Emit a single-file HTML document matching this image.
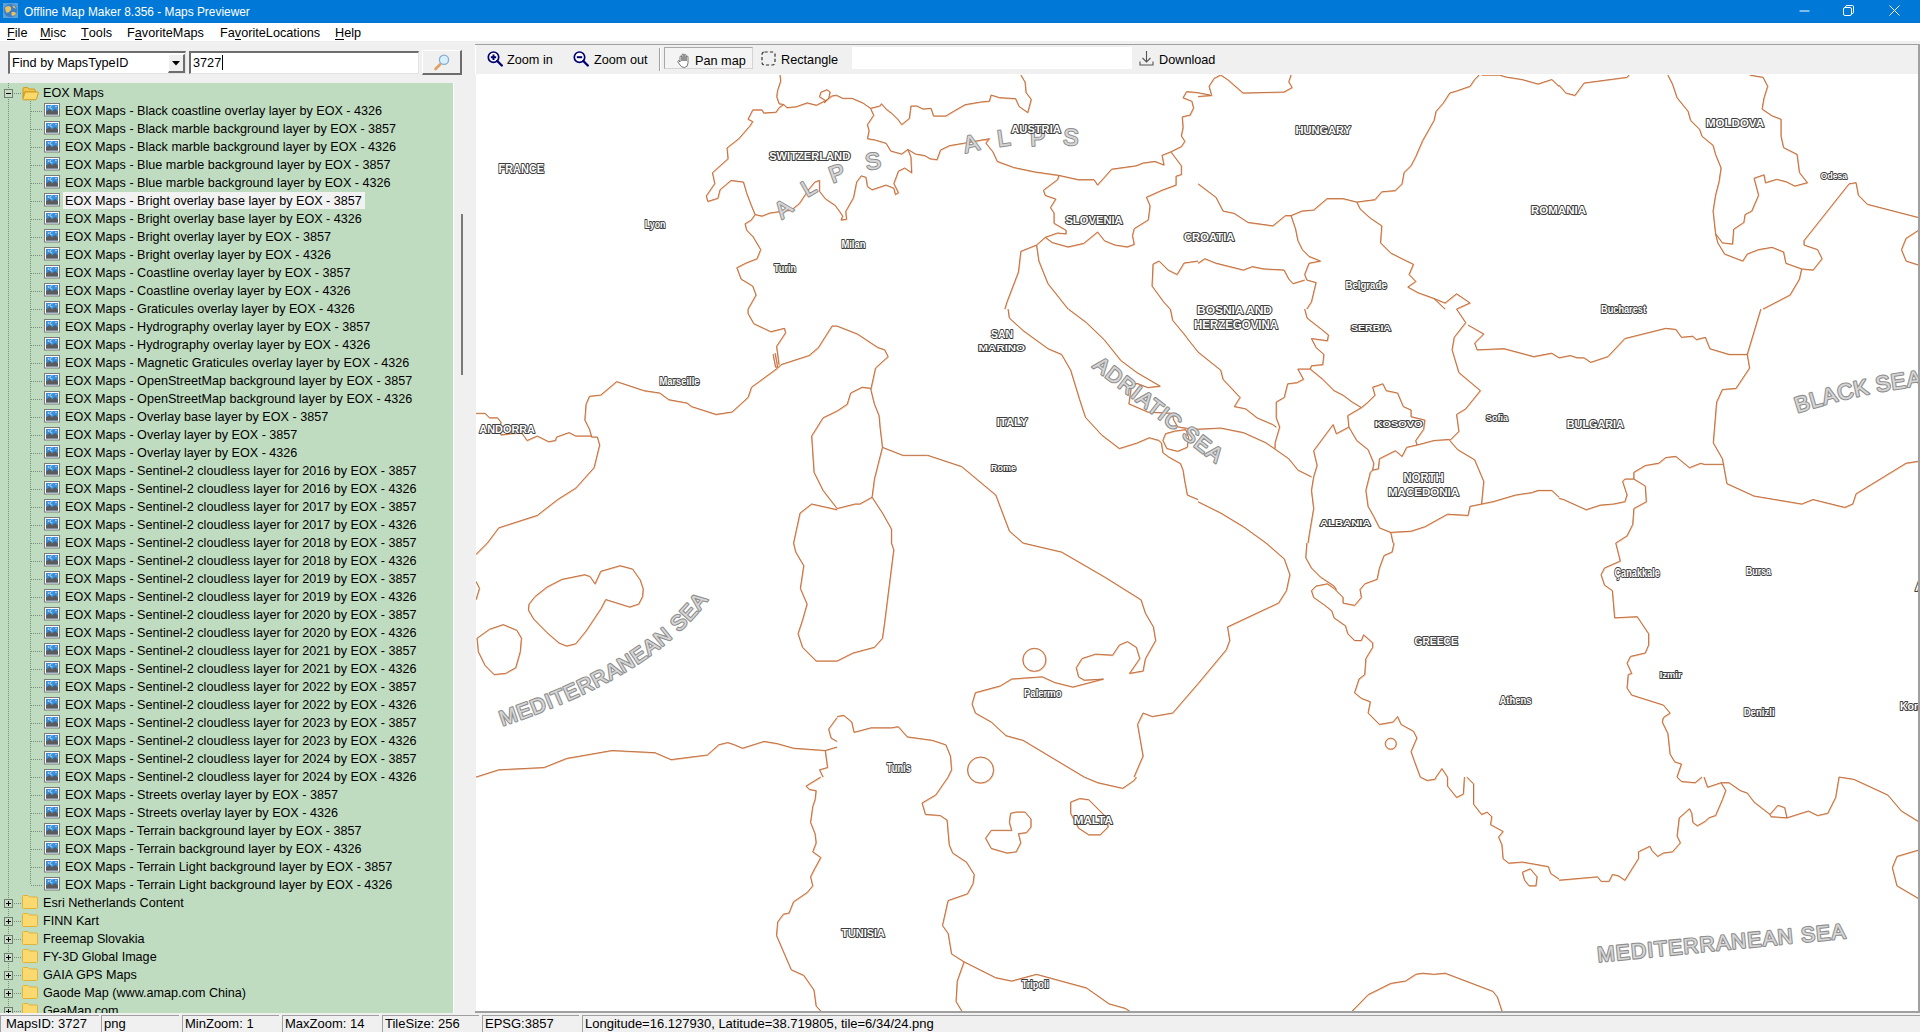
<!DOCTYPE html><html><head><meta charset="utf-8"><style>
*{box-sizing:border-box}
body{margin:0;width:1920px;height:1032px;overflow:hidden;background:#f0f0f0;font-family:"Liberation Sans",sans-serif;position:relative}
.abs{position:absolute}
#title{position:absolute;left:0;top:0;width:1920px;height:23px;background:#0078d7;color:#fff}
#title .tx{position:absolute;left:24px;top:5px;font-size:11.9px;}
#menu{position:absolute;left:0;top:23px;width:1920px;height:18px;background:#fff;font-size:12.7px;color:#000}
#menu span{position:absolute;top:3px}
#menu u{text-decoration:none;border-bottom:1px solid #000;line-height:11px;display:inline-block}
#left{position:absolute;left:0;top:42px;width:475px;height:972px;background:#f0f0f0}
#tree{position:absolute;left:0;top:83px;width:453px;height:930px;background:#c0dcc0;overflow:hidden}
#treewrap{position:absolute;left:0;top:0;width:453px;height:1013px;overflow:hidden}
.vdot{position:absolute;width:1px;background-image:linear-gradient(#7c8c7c 50%,transparent 50%);background-size:1px 2px}
.hdot{position:absolute;height:1px;background-image:linear-gradient(90deg,#7c8c7c 50%,transparent 50%);background-size:2px 1px}
.box{position:absolute;width:9px;height:9px;border:1px solid #6f7f6f;background:#c8dcc8}
.minus{position:absolute;left:1px;top:3px;width:5px;height:1px;background:#000}
.plus{position:absolute;left:3px;top:1px;width:1px;height:5px;background:#000}
.row{position:absolute;height:18px;width:420px}
.row svg{position:absolute;left:0;top:2px}
.t{position:absolute;top:3px;font-size:12.6px;line-height:14px;color:#000;white-space:nowrap;padding:0 2px 0 2px}
.t.sel{background:#f2f2f2;left:19px !important;top:1px;padding:2px 3px 1px 2px}
#status{position:absolute;left:0;top:1015px;width:1920px;height:17px;background:#f0f0f0;font-size:13px}
.sp{position:absolute;top:0;height:17px;border-top:1px solid #a0a0a0;border-left:1px solid #a0a0a0;padding-left:5px;line-height:15px;white-space:nowrap}
#tb{position:absolute;left:475px;top:44px;width:1445px;height:30px;background:#f0f0f0;border-top:1px solid #a0a0a0;font-size:12.7px}
#tb .b{position:absolute;top:6px;white-space:nowrap}
#map{position:absolute;left:476px;top:74px;width:1442px;height:937px;background:#fff;overflow:hidden}
#mapb{position:absolute;left:475px;top:1011px;width:1445px;height:2px;background:#a0a0a0}
#mapr{position:absolute;left:1918px;top:44px;width:2px;height:969px;background:#a0a0a0}
#mapl{position:absolute;left:475px;top:74px;width:1px;height:938px;background:#f0f0f0}
</style></head><body>
<div id="title">
<svg width="15" height="15" viewBox="0 0 16 16" style="position:absolute;left:3px;top:3px"><rect x="0" y="0" width="16" height="16" fill="#5aa0d8"/><circle cx="8" cy="8" r="7" fill="#3b7fc4"/><path d="M2 5 Q5 2 8 4 Q10 7 7 9 Q4 12 3 9Z M9 10 Q12 8 14 11 Q12 15 9 13Z M10 2 Q13 3 14 6 L11 5Z" fill="#e8c060"/></svg>
<span class="tx">Offline Map Maker 8.356 - Maps Previewer</span>
<svg width="12" height="12" viewBox="0 0 12 12" style="position:absolute;left:1799px;top:5px"><path d="M0.5 6h10" stroke="#fff" stroke-width="1"/></svg>
<svg width="12" height="12" viewBox="0 0 12 12" style="position:absolute;left:1843px;top:5px"><rect x="0.5" y="2.5" width="8" height="8" rx="1.5" fill="none" stroke="#fff"/><path d="M2.5 2.5 V2 Q2.5 0.5 4 0.5 H9.5 Q10.5 0.5 10.5 2 V7.5 Q10.5 8.5 9 8.5" fill="none" stroke="#fff"/></svg>
<svg width="12" height="12" viewBox="0 0 12 12" style="position:absolute;left:1889px;top:5px"><path d="M0.5 0.5L10.5 10.5M10.5 0.5L0.5 10.5" stroke="#fff" stroke-width="1"/></svg>
</div>
<div id="menu">
<span style="left:7px"><u>F</u>ile</span>
<span style="left:40px"><u>M</u>isc</span>
<span style="left:81px"><u>T</u>ools</span>
<span style="left:127px">F<u>a</u>voriteMaps</span>
<span style="left:220px">Fa<u>v</u>oriteLocations</span>
<span style="left:335px"><u>H</u>elp</span>
</div>
<div id="left">
 <div class="abs" style="left:8px;top:9px;width:178px;height:23px;background:#fff;border-top:2px solid #6d6d6d;border-left:2px solid #6d6d6d;border-right:1px solid #e3e3e3;border-bottom:1px solid #e3e3e3"></div>
 <div class="abs" style="left:12px;top:14px;font-size:12.7px">Find by MapsTypeID</div>
 <div class="abs" style="left:168px;top:12px;width:17px;height:19px;background:#f0f0f0;border-right:2px solid #6d6d6d;border-bottom:2px solid #6d6d6d;border-top:1px solid #fff;border-left:1px solid #fff"></div>
 <svg class="abs" style="left:172px;top:19px" width="9" height="5" viewBox="0 0 9 5"><path d="M0 0h8L4 4.5z" fill="#000"/></svg>
 <div class="abs" style="left:189px;top:9px;width:230px;height:23px;background:#fff;border-top:2px solid #6d6d6d;border-left:2px solid #6d6d6d;border-right:1px solid #e3e3e3;border-bottom:1px solid #e3e3e3"></div>
 <div class="abs" style="left:193px;top:14px;font-size:12.7px">3727</div>
 <div class="abs" style="left:222px;top:13px;width:1px;height:15px;background:#000"></div>
 <div class="abs" style="left:422px;top:8px;width:40px;height:25px;background:#f0f0f0;border-right:2px solid #6d6d6d;border-bottom:2px solid #6d6d6d;border-top:1px solid #fff;border-left:1px solid #fff"></div>
 <svg class="abs" style="left:433px;top:12px" width="18" height="18" viewBox="0 0 18 18"><path d="M2.5 15L7 10.5" stroke="#e0a060" stroke-width="2.6" stroke-linecap="round"/><circle cx="11" cy="5.8" r="4.6" fill="#d6f0fc" stroke="#8aaccc" stroke-width="1.3"/></svg>
</div>
<div id="treewrap"><div id="tree"></div>
<div class="abs" style="left:0;top:0;width:453px;height:1013px">
<div class="vdot" style="left:8px;top:83px;height:930px"></div>
<div class="vdot" style="left:30px;top:101px;height:783px"></div>
<div class="box" style="left:4px;top:89px"><div class="minus"></div></div>
<div class="hdot" style="left:14px;top:93px;width:8px"></div>
<div class="row" style="left:22px;top:83px"><svg class="fi" width="17" height="14" viewBox="0 0 17 14" style="top:4px"><path d="M1 1.8 Q1 0.5 2.3 0.5 L5.5 0.5 L7 2 L12 2 Q13.2 2 13.2 3.2 L13.2 5 L2 5 L1 11Z" fill="#f2c44a" stroke="#cf9a1c" stroke-width="1"/><path d="M3.2 5 L15.6 5 Q16.6 5 16.3 6 L14.6 11.8 Q14.3 12.8 13.2 12.8 L1.6 12.8 Q0.6 12.8 0.9 11.8Z" fill="#fbd86a" stroke="#cf9a1c" stroke-width="1"/></svg><span class="t" style="left:19px">EOX Maps</span></div>
<div class="hdot" style="left:31px;top:111px;width:12px"></div>
<div class="row" style="left:44px;top:101px"><svg class="ic" width="17" height="14" viewBox="0 0 17 14"><rect x="0.5" y="0.5" width="15" height="12.5" fill="#fff" stroke="#7a7a7a"/><rect x="2" y="2" width="12" height="9.5" fill="#3b8fd8"/><path d="M2 11.5 L2 8.5 L5.5 6 L8 8.5 L11 6 L14 8.5 L14 11.5Z" fill="#5b5b5b"/><circle cx="4.5" cy="4" r="0.8" fill="#cfe8ff"/><path d="M8.3 2.8 A1.6 1.6 0 1 0 8.3 5.8" fill="none" stroke="#e0f0ff" stroke-width="0.8"/><circle cx="12" cy="3.5" r="0.7" fill="#cfe8ff"/></svg><span class="t" style="left:19px">EOX Maps - Black coastline overlay layer by EOX - 4326</span></div>
<div class="hdot" style="left:31px;top:129px;width:12px"></div>
<div class="row" style="left:44px;top:119px"><svg class="ic" width="17" height="14" viewBox="0 0 17 14"><rect x="0.5" y="0.5" width="15" height="12.5" fill="#fff" stroke="#7a7a7a"/><rect x="2" y="2" width="12" height="9.5" fill="#3b8fd8"/><path d="M2 11.5 L2 8.5 L5.5 6 L8 8.5 L11 6 L14 8.5 L14 11.5Z" fill="#5b5b5b"/><circle cx="4.5" cy="4" r="0.8" fill="#cfe8ff"/><path d="M8.3 2.8 A1.6 1.6 0 1 0 8.3 5.8" fill="none" stroke="#e0f0ff" stroke-width="0.8"/><circle cx="12" cy="3.5" r="0.7" fill="#cfe8ff"/></svg><span class="t" style="left:19px">EOX Maps - Black marble background layer by EOX - 3857</span></div>
<div class="hdot" style="left:31px;top:147px;width:12px"></div>
<div class="row" style="left:44px;top:137px"><svg class="ic" width="17" height="14" viewBox="0 0 17 14"><rect x="0.5" y="0.5" width="15" height="12.5" fill="#fff" stroke="#7a7a7a"/><rect x="2" y="2" width="12" height="9.5" fill="#3b8fd8"/><path d="M2 11.5 L2 8.5 L5.5 6 L8 8.5 L11 6 L14 8.5 L14 11.5Z" fill="#5b5b5b"/><circle cx="4.5" cy="4" r="0.8" fill="#cfe8ff"/><path d="M8.3 2.8 A1.6 1.6 0 1 0 8.3 5.8" fill="none" stroke="#e0f0ff" stroke-width="0.8"/><circle cx="12" cy="3.5" r="0.7" fill="#cfe8ff"/></svg><span class="t" style="left:19px">EOX Maps - Black marble background layer by EOX - 4326</span></div>
<div class="hdot" style="left:31px;top:165px;width:12px"></div>
<div class="row" style="left:44px;top:155px"><svg class="ic" width="17" height="14" viewBox="0 0 17 14"><rect x="0.5" y="0.5" width="15" height="12.5" fill="#fff" stroke="#7a7a7a"/><rect x="2" y="2" width="12" height="9.5" fill="#3b8fd8"/><path d="M2 11.5 L2 8.5 L5.5 6 L8 8.5 L11 6 L14 8.5 L14 11.5Z" fill="#5b5b5b"/><circle cx="4.5" cy="4" r="0.8" fill="#cfe8ff"/><path d="M8.3 2.8 A1.6 1.6 0 1 0 8.3 5.8" fill="none" stroke="#e0f0ff" stroke-width="0.8"/><circle cx="12" cy="3.5" r="0.7" fill="#cfe8ff"/></svg><span class="t" style="left:19px">EOX Maps - Blue marble background layer by EOX - 3857</span></div>
<div class="hdot" style="left:31px;top:183px;width:12px"></div>
<div class="row" style="left:44px;top:173px"><svg class="ic" width="17" height="14" viewBox="0 0 17 14"><rect x="0.5" y="0.5" width="15" height="12.5" fill="#fff" stroke="#7a7a7a"/><rect x="2" y="2" width="12" height="9.5" fill="#3b8fd8"/><path d="M2 11.5 L2 8.5 L5.5 6 L8 8.5 L11 6 L14 8.5 L14 11.5Z" fill="#5b5b5b"/><circle cx="4.5" cy="4" r="0.8" fill="#cfe8ff"/><path d="M8.3 2.8 A1.6 1.6 0 1 0 8.3 5.8" fill="none" stroke="#e0f0ff" stroke-width="0.8"/><circle cx="12" cy="3.5" r="0.7" fill="#cfe8ff"/></svg><span class="t" style="left:19px">EOX Maps - Blue marble background layer by EOX - 4326</span></div>
<div class="hdot" style="left:31px;top:201px;width:12px"></div>
<div class="row" style="left:44px;top:191px"><svg class="ic" width="17" height="14" viewBox="0 0 17 14"><rect x="0.5" y="0.5" width="15" height="12.5" fill="#fff" stroke="#7a7a7a"/><rect x="2" y="2" width="12" height="9.5" fill="#3b8fd8"/><path d="M2 11.5 L2 8.5 L5.5 6 L8 8.5 L11 6 L14 8.5 L14 11.5Z" fill="#5b5b5b"/><circle cx="4.5" cy="4" r="0.8" fill="#cfe8ff"/><path d="M8.3 2.8 A1.6 1.6 0 1 0 8.3 5.8" fill="none" stroke="#e0f0ff" stroke-width="0.8"/><circle cx="12" cy="3.5" r="0.7" fill="#cfe8ff"/></svg><span class="t sel" style="left:19px">EOX Maps - Bright overlay base layer by EOX - 3857</span></div>
<div class="hdot" style="left:31px;top:219px;width:12px"></div>
<div class="row" style="left:44px;top:209px"><svg class="ic" width="17" height="14" viewBox="0 0 17 14"><rect x="0.5" y="0.5" width="15" height="12.5" fill="#fff" stroke="#7a7a7a"/><rect x="2" y="2" width="12" height="9.5" fill="#3b8fd8"/><path d="M2 11.5 L2 8.5 L5.5 6 L8 8.5 L11 6 L14 8.5 L14 11.5Z" fill="#5b5b5b"/><circle cx="4.5" cy="4" r="0.8" fill="#cfe8ff"/><path d="M8.3 2.8 A1.6 1.6 0 1 0 8.3 5.8" fill="none" stroke="#e0f0ff" stroke-width="0.8"/><circle cx="12" cy="3.5" r="0.7" fill="#cfe8ff"/></svg><span class="t" style="left:19px">EOX Maps - Bright overlay base layer by EOX - 4326</span></div>
<div class="hdot" style="left:31px;top:237px;width:12px"></div>
<div class="row" style="left:44px;top:227px"><svg class="ic" width="17" height="14" viewBox="0 0 17 14"><rect x="0.5" y="0.5" width="15" height="12.5" fill="#fff" stroke="#7a7a7a"/><rect x="2" y="2" width="12" height="9.5" fill="#3b8fd8"/><path d="M2 11.5 L2 8.5 L5.5 6 L8 8.5 L11 6 L14 8.5 L14 11.5Z" fill="#5b5b5b"/><circle cx="4.5" cy="4" r="0.8" fill="#cfe8ff"/><path d="M8.3 2.8 A1.6 1.6 0 1 0 8.3 5.8" fill="none" stroke="#e0f0ff" stroke-width="0.8"/><circle cx="12" cy="3.5" r="0.7" fill="#cfe8ff"/></svg><span class="t" style="left:19px">EOX Maps - Bright overlay layer by EOX - 3857</span></div>
<div class="hdot" style="left:31px;top:255px;width:12px"></div>
<div class="row" style="left:44px;top:245px"><svg class="ic" width="17" height="14" viewBox="0 0 17 14"><rect x="0.5" y="0.5" width="15" height="12.5" fill="#fff" stroke="#7a7a7a"/><rect x="2" y="2" width="12" height="9.5" fill="#3b8fd8"/><path d="M2 11.5 L2 8.5 L5.5 6 L8 8.5 L11 6 L14 8.5 L14 11.5Z" fill="#5b5b5b"/><circle cx="4.5" cy="4" r="0.8" fill="#cfe8ff"/><path d="M8.3 2.8 A1.6 1.6 0 1 0 8.3 5.8" fill="none" stroke="#e0f0ff" stroke-width="0.8"/><circle cx="12" cy="3.5" r="0.7" fill="#cfe8ff"/></svg><span class="t" style="left:19px">EOX Maps - Bright overlay layer by EOX - 4326</span></div>
<div class="hdot" style="left:31px;top:273px;width:12px"></div>
<div class="row" style="left:44px;top:263px"><svg class="ic" width="17" height="14" viewBox="0 0 17 14"><rect x="0.5" y="0.5" width="15" height="12.5" fill="#fff" stroke="#7a7a7a"/><rect x="2" y="2" width="12" height="9.5" fill="#3b8fd8"/><path d="M2 11.5 L2 8.5 L5.5 6 L8 8.5 L11 6 L14 8.5 L14 11.5Z" fill="#5b5b5b"/><circle cx="4.5" cy="4" r="0.8" fill="#cfe8ff"/><path d="M8.3 2.8 A1.6 1.6 0 1 0 8.3 5.8" fill="none" stroke="#e0f0ff" stroke-width="0.8"/><circle cx="12" cy="3.5" r="0.7" fill="#cfe8ff"/></svg><span class="t" style="left:19px">EOX Maps - Coastline overlay layer by EOX - 3857</span></div>
<div class="hdot" style="left:31px;top:291px;width:12px"></div>
<div class="row" style="left:44px;top:281px"><svg class="ic" width="17" height="14" viewBox="0 0 17 14"><rect x="0.5" y="0.5" width="15" height="12.5" fill="#fff" stroke="#7a7a7a"/><rect x="2" y="2" width="12" height="9.5" fill="#3b8fd8"/><path d="M2 11.5 L2 8.5 L5.5 6 L8 8.5 L11 6 L14 8.5 L14 11.5Z" fill="#5b5b5b"/><circle cx="4.5" cy="4" r="0.8" fill="#cfe8ff"/><path d="M8.3 2.8 A1.6 1.6 0 1 0 8.3 5.8" fill="none" stroke="#e0f0ff" stroke-width="0.8"/><circle cx="12" cy="3.5" r="0.7" fill="#cfe8ff"/></svg><span class="t" style="left:19px">EOX Maps - Coastline overlay layer by EOX - 4326</span></div>
<div class="hdot" style="left:31px;top:309px;width:12px"></div>
<div class="row" style="left:44px;top:299px"><svg class="ic" width="17" height="14" viewBox="0 0 17 14"><rect x="0.5" y="0.5" width="15" height="12.5" fill="#fff" stroke="#7a7a7a"/><rect x="2" y="2" width="12" height="9.5" fill="#3b8fd8"/><path d="M2 11.5 L2 8.5 L5.5 6 L8 8.5 L11 6 L14 8.5 L14 11.5Z" fill="#5b5b5b"/><circle cx="4.5" cy="4" r="0.8" fill="#cfe8ff"/><path d="M8.3 2.8 A1.6 1.6 0 1 0 8.3 5.8" fill="none" stroke="#e0f0ff" stroke-width="0.8"/><circle cx="12" cy="3.5" r="0.7" fill="#cfe8ff"/></svg><span class="t" style="left:19px">EOX Maps - Graticules overlay layer by EOX - 4326</span></div>
<div class="hdot" style="left:31px;top:327px;width:12px"></div>
<div class="row" style="left:44px;top:317px"><svg class="ic" width="17" height="14" viewBox="0 0 17 14"><rect x="0.5" y="0.5" width="15" height="12.5" fill="#fff" stroke="#7a7a7a"/><rect x="2" y="2" width="12" height="9.5" fill="#3b8fd8"/><path d="M2 11.5 L2 8.5 L5.5 6 L8 8.5 L11 6 L14 8.5 L14 11.5Z" fill="#5b5b5b"/><circle cx="4.5" cy="4" r="0.8" fill="#cfe8ff"/><path d="M8.3 2.8 A1.6 1.6 0 1 0 8.3 5.8" fill="none" stroke="#e0f0ff" stroke-width="0.8"/><circle cx="12" cy="3.5" r="0.7" fill="#cfe8ff"/></svg><span class="t" style="left:19px">EOX Maps - Hydrography overlay layer by EOX - 3857</span></div>
<div class="hdot" style="left:31px;top:345px;width:12px"></div>
<div class="row" style="left:44px;top:335px"><svg class="ic" width="17" height="14" viewBox="0 0 17 14"><rect x="0.5" y="0.5" width="15" height="12.5" fill="#fff" stroke="#7a7a7a"/><rect x="2" y="2" width="12" height="9.5" fill="#3b8fd8"/><path d="M2 11.5 L2 8.5 L5.5 6 L8 8.5 L11 6 L14 8.5 L14 11.5Z" fill="#5b5b5b"/><circle cx="4.5" cy="4" r="0.8" fill="#cfe8ff"/><path d="M8.3 2.8 A1.6 1.6 0 1 0 8.3 5.8" fill="none" stroke="#e0f0ff" stroke-width="0.8"/><circle cx="12" cy="3.5" r="0.7" fill="#cfe8ff"/></svg><span class="t" style="left:19px">EOX Maps - Hydrography overlay layer by EOX - 4326</span></div>
<div class="hdot" style="left:31px;top:363px;width:12px"></div>
<div class="row" style="left:44px;top:353px"><svg class="ic" width="17" height="14" viewBox="0 0 17 14"><rect x="0.5" y="0.5" width="15" height="12.5" fill="#fff" stroke="#7a7a7a"/><rect x="2" y="2" width="12" height="9.5" fill="#3b8fd8"/><path d="M2 11.5 L2 8.5 L5.5 6 L8 8.5 L11 6 L14 8.5 L14 11.5Z" fill="#5b5b5b"/><circle cx="4.5" cy="4" r="0.8" fill="#cfe8ff"/><path d="M8.3 2.8 A1.6 1.6 0 1 0 8.3 5.8" fill="none" stroke="#e0f0ff" stroke-width="0.8"/><circle cx="12" cy="3.5" r="0.7" fill="#cfe8ff"/></svg><span class="t" style="left:19px">EOX Maps - Magnetic Graticules overlay layer by EOX - 4326</span></div>
<div class="hdot" style="left:31px;top:381px;width:12px"></div>
<div class="row" style="left:44px;top:371px"><svg class="ic" width="17" height="14" viewBox="0 0 17 14"><rect x="0.5" y="0.5" width="15" height="12.5" fill="#fff" stroke="#7a7a7a"/><rect x="2" y="2" width="12" height="9.5" fill="#3b8fd8"/><path d="M2 11.5 L2 8.5 L5.5 6 L8 8.5 L11 6 L14 8.5 L14 11.5Z" fill="#5b5b5b"/><circle cx="4.5" cy="4" r="0.8" fill="#cfe8ff"/><path d="M8.3 2.8 A1.6 1.6 0 1 0 8.3 5.8" fill="none" stroke="#e0f0ff" stroke-width="0.8"/><circle cx="12" cy="3.5" r="0.7" fill="#cfe8ff"/></svg><span class="t" style="left:19px">EOX Maps - OpenStreetMap background layer by EOX - 3857</span></div>
<div class="hdot" style="left:31px;top:399px;width:12px"></div>
<div class="row" style="left:44px;top:389px"><svg class="ic" width="17" height="14" viewBox="0 0 17 14"><rect x="0.5" y="0.5" width="15" height="12.5" fill="#fff" stroke="#7a7a7a"/><rect x="2" y="2" width="12" height="9.5" fill="#3b8fd8"/><path d="M2 11.5 L2 8.5 L5.5 6 L8 8.5 L11 6 L14 8.5 L14 11.5Z" fill="#5b5b5b"/><circle cx="4.5" cy="4" r="0.8" fill="#cfe8ff"/><path d="M8.3 2.8 A1.6 1.6 0 1 0 8.3 5.8" fill="none" stroke="#e0f0ff" stroke-width="0.8"/><circle cx="12" cy="3.5" r="0.7" fill="#cfe8ff"/></svg><span class="t" style="left:19px">EOX Maps - OpenStreetMap background layer by EOX - 4326</span></div>
<div class="hdot" style="left:31px;top:417px;width:12px"></div>
<div class="row" style="left:44px;top:407px"><svg class="ic" width="17" height="14" viewBox="0 0 17 14"><rect x="0.5" y="0.5" width="15" height="12.5" fill="#fff" stroke="#7a7a7a"/><rect x="2" y="2" width="12" height="9.5" fill="#3b8fd8"/><path d="M2 11.5 L2 8.5 L5.5 6 L8 8.5 L11 6 L14 8.5 L14 11.5Z" fill="#5b5b5b"/><circle cx="4.5" cy="4" r="0.8" fill="#cfe8ff"/><path d="M8.3 2.8 A1.6 1.6 0 1 0 8.3 5.8" fill="none" stroke="#e0f0ff" stroke-width="0.8"/><circle cx="12" cy="3.5" r="0.7" fill="#cfe8ff"/></svg><span class="t" style="left:19px">EOX Maps - Overlay base layer by EOX - 3857</span></div>
<div class="hdot" style="left:31px;top:435px;width:12px"></div>
<div class="row" style="left:44px;top:425px"><svg class="ic" width="17" height="14" viewBox="0 0 17 14"><rect x="0.5" y="0.5" width="15" height="12.5" fill="#fff" stroke="#7a7a7a"/><rect x="2" y="2" width="12" height="9.5" fill="#3b8fd8"/><path d="M2 11.5 L2 8.5 L5.5 6 L8 8.5 L11 6 L14 8.5 L14 11.5Z" fill="#5b5b5b"/><circle cx="4.5" cy="4" r="0.8" fill="#cfe8ff"/><path d="M8.3 2.8 A1.6 1.6 0 1 0 8.3 5.8" fill="none" stroke="#e0f0ff" stroke-width="0.8"/><circle cx="12" cy="3.5" r="0.7" fill="#cfe8ff"/></svg><span class="t" style="left:19px">EOX Maps - Overlay layer by EOX - 3857</span></div>
<div class="hdot" style="left:31px;top:453px;width:12px"></div>
<div class="row" style="left:44px;top:443px"><svg class="ic" width="17" height="14" viewBox="0 0 17 14"><rect x="0.5" y="0.5" width="15" height="12.5" fill="#fff" stroke="#7a7a7a"/><rect x="2" y="2" width="12" height="9.5" fill="#3b8fd8"/><path d="M2 11.5 L2 8.5 L5.5 6 L8 8.5 L11 6 L14 8.5 L14 11.5Z" fill="#5b5b5b"/><circle cx="4.5" cy="4" r="0.8" fill="#cfe8ff"/><path d="M8.3 2.8 A1.6 1.6 0 1 0 8.3 5.8" fill="none" stroke="#e0f0ff" stroke-width="0.8"/><circle cx="12" cy="3.5" r="0.7" fill="#cfe8ff"/></svg><span class="t" style="left:19px">EOX Maps - Overlay layer by EOX - 4326</span></div>
<div class="hdot" style="left:31px;top:471px;width:12px"></div>
<div class="row" style="left:44px;top:461px"><svg class="ic" width="17" height="14" viewBox="0 0 17 14"><rect x="0.5" y="0.5" width="15" height="12.5" fill="#fff" stroke="#7a7a7a"/><rect x="2" y="2" width="12" height="9.5" fill="#3b8fd8"/><path d="M2 11.5 L2 8.5 L5.5 6 L8 8.5 L11 6 L14 8.5 L14 11.5Z" fill="#5b5b5b"/><circle cx="4.5" cy="4" r="0.8" fill="#cfe8ff"/><path d="M8.3 2.8 A1.6 1.6 0 1 0 8.3 5.8" fill="none" stroke="#e0f0ff" stroke-width="0.8"/><circle cx="12" cy="3.5" r="0.7" fill="#cfe8ff"/></svg><span class="t" style="left:19px">EOX Maps - Sentinel-2 cloudless layer for 2016 by EOX - 3857</span></div>
<div class="hdot" style="left:31px;top:489px;width:12px"></div>
<div class="row" style="left:44px;top:479px"><svg class="ic" width="17" height="14" viewBox="0 0 17 14"><rect x="0.5" y="0.5" width="15" height="12.5" fill="#fff" stroke="#7a7a7a"/><rect x="2" y="2" width="12" height="9.5" fill="#3b8fd8"/><path d="M2 11.5 L2 8.5 L5.5 6 L8 8.5 L11 6 L14 8.5 L14 11.5Z" fill="#5b5b5b"/><circle cx="4.5" cy="4" r="0.8" fill="#cfe8ff"/><path d="M8.3 2.8 A1.6 1.6 0 1 0 8.3 5.8" fill="none" stroke="#e0f0ff" stroke-width="0.8"/><circle cx="12" cy="3.5" r="0.7" fill="#cfe8ff"/></svg><span class="t" style="left:19px">EOX Maps - Sentinel-2 cloudless layer for 2016 by EOX - 4326</span></div>
<div class="hdot" style="left:31px;top:507px;width:12px"></div>
<div class="row" style="left:44px;top:497px"><svg class="ic" width="17" height="14" viewBox="0 0 17 14"><rect x="0.5" y="0.5" width="15" height="12.5" fill="#fff" stroke="#7a7a7a"/><rect x="2" y="2" width="12" height="9.5" fill="#3b8fd8"/><path d="M2 11.5 L2 8.5 L5.5 6 L8 8.5 L11 6 L14 8.5 L14 11.5Z" fill="#5b5b5b"/><circle cx="4.5" cy="4" r="0.8" fill="#cfe8ff"/><path d="M8.3 2.8 A1.6 1.6 0 1 0 8.3 5.8" fill="none" stroke="#e0f0ff" stroke-width="0.8"/><circle cx="12" cy="3.5" r="0.7" fill="#cfe8ff"/></svg><span class="t" style="left:19px">EOX Maps - Sentinel-2 cloudless layer for 2017 by EOX - 3857</span></div>
<div class="hdot" style="left:31px;top:525px;width:12px"></div>
<div class="row" style="left:44px;top:515px"><svg class="ic" width="17" height="14" viewBox="0 0 17 14"><rect x="0.5" y="0.5" width="15" height="12.5" fill="#fff" stroke="#7a7a7a"/><rect x="2" y="2" width="12" height="9.5" fill="#3b8fd8"/><path d="M2 11.5 L2 8.5 L5.5 6 L8 8.5 L11 6 L14 8.5 L14 11.5Z" fill="#5b5b5b"/><circle cx="4.5" cy="4" r="0.8" fill="#cfe8ff"/><path d="M8.3 2.8 A1.6 1.6 0 1 0 8.3 5.8" fill="none" stroke="#e0f0ff" stroke-width="0.8"/><circle cx="12" cy="3.5" r="0.7" fill="#cfe8ff"/></svg><span class="t" style="left:19px">EOX Maps - Sentinel-2 cloudless layer for 2017 by EOX - 4326</span></div>
<div class="hdot" style="left:31px;top:543px;width:12px"></div>
<div class="row" style="left:44px;top:533px"><svg class="ic" width="17" height="14" viewBox="0 0 17 14"><rect x="0.5" y="0.5" width="15" height="12.5" fill="#fff" stroke="#7a7a7a"/><rect x="2" y="2" width="12" height="9.5" fill="#3b8fd8"/><path d="M2 11.5 L2 8.5 L5.5 6 L8 8.5 L11 6 L14 8.5 L14 11.5Z" fill="#5b5b5b"/><circle cx="4.5" cy="4" r="0.8" fill="#cfe8ff"/><path d="M8.3 2.8 A1.6 1.6 0 1 0 8.3 5.8" fill="none" stroke="#e0f0ff" stroke-width="0.8"/><circle cx="12" cy="3.5" r="0.7" fill="#cfe8ff"/></svg><span class="t" style="left:19px">EOX Maps - Sentinel-2 cloudless layer for 2018 by EOX - 3857</span></div>
<div class="hdot" style="left:31px;top:561px;width:12px"></div>
<div class="row" style="left:44px;top:551px"><svg class="ic" width="17" height="14" viewBox="0 0 17 14"><rect x="0.5" y="0.5" width="15" height="12.5" fill="#fff" stroke="#7a7a7a"/><rect x="2" y="2" width="12" height="9.5" fill="#3b8fd8"/><path d="M2 11.5 L2 8.5 L5.5 6 L8 8.5 L11 6 L14 8.5 L14 11.5Z" fill="#5b5b5b"/><circle cx="4.5" cy="4" r="0.8" fill="#cfe8ff"/><path d="M8.3 2.8 A1.6 1.6 0 1 0 8.3 5.8" fill="none" stroke="#e0f0ff" stroke-width="0.8"/><circle cx="12" cy="3.5" r="0.7" fill="#cfe8ff"/></svg><span class="t" style="left:19px">EOX Maps - Sentinel-2 cloudless layer for 2018 by EOX - 4326</span></div>
<div class="hdot" style="left:31px;top:579px;width:12px"></div>
<div class="row" style="left:44px;top:569px"><svg class="ic" width="17" height="14" viewBox="0 0 17 14"><rect x="0.5" y="0.5" width="15" height="12.5" fill="#fff" stroke="#7a7a7a"/><rect x="2" y="2" width="12" height="9.5" fill="#3b8fd8"/><path d="M2 11.5 L2 8.5 L5.5 6 L8 8.5 L11 6 L14 8.5 L14 11.5Z" fill="#5b5b5b"/><circle cx="4.5" cy="4" r="0.8" fill="#cfe8ff"/><path d="M8.3 2.8 A1.6 1.6 0 1 0 8.3 5.8" fill="none" stroke="#e0f0ff" stroke-width="0.8"/><circle cx="12" cy="3.5" r="0.7" fill="#cfe8ff"/></svg><span class="t" style="left:19px">EOX Maps - Sentinel-2 cloudless layer for 2019 by EOX - 3857</span></div>
<div class="hdot" style="left:31px;top:597px;width:12px"></div>
<div class="row" style="left:44px;top:587px"><svg class="ic" width="17" height="14" viewBox="0 0 17 14"><rect x="0.5" y="0.5" width="15" height="12.5" fill="#fff" stroke="#7a7a7a"/><rect x="2" y="2" width="12" height="9.5" fill="#3b8fd8"/><path d="M2 11.5 L2 8.5 L5.5 6 L8 8.5 L11 6 L14 8.5 L14 11.5Z" fill="#5b5b5b"/><circle cx="4.5" cy="4" r="0.8" fill="#cfe8ff"/><path d="M8.3 2.8 A1.6 1.6 0 1 0 8.3 5.8" fill="none" stroke="#e0f0ff" stroke-width="0.8"/><circle cx="12" cy="3.5" r="0.7" fill="#cfe8ff"/></svg><span class="t" style="left:19px">EOX Maps - Sentinel-2 cloudless layer for 2019 by EOX - 4326</span></div>
<div class="hdot" style="left:31px;top:615px;width:12px"></div>
<div class="row" style="left:44px;top:605px"><svg class="ic" width="17" height="14" viewBox="0 0 17 14"><rect x="0.5" y="0.5" width="15" height="12.5" fill="#fff" stroke="#7a7a7a"/><rect x="2" y="2" width="12" height="9.5" fill="#3b8fd8"/><path d="M2 11.5 L2 8.5 L5.5 6 L8 8.5 L11 6 L14 8.5 L14 11.5Z" fill="#5b5b5b"/><circle cx="4.5" cy="4" r="0.8" fill="#cfe8ff"/><path d="M8.3 2.8 A1.6 1.6 0 1 0 8.3 5.8" fill="none" stroke="#e0f0ff" stroke-width="0.8"/><circle cx="12" cy="3.5" r="0.7" fill="#cfe8ff"/></svg><span class="t" style="left:19px">EOX Maps - Sentinel-2 cloudless layer for 2020 by EOX - 3857</span></div>
<div class="hdot" style="left:31px;top:633px;width:12px"></div>
<div class="row" style="left:44px;top:623px"><svg class="ic" width="17" height="14" viewBox="0 0 17 14"><rect x="0.5" y="0.5" width="15" height="12.5" fill="#fff" stroke="#7a7a7a"/><rect x="2" y="2" width="12" height="9.5" fill="#3b8fd8"/><path d="M2 11.5 L2 8.5 L5.5 6 L8 8.5 L11 6 L14 8.5 L14 11.5Z" fill="#5b5b5b"/><circle cx="4.5" cy="4" r="0.8" fill="#cfe8ff"/><path d="M8.3 2.8 A1.6 1.6 0 1 0 8.3 5.8" fill="none" stroke="#e0f0ff" stroke-width="0.8"/><circle cx="12" cy="3.5" r="0.7" fill="#cfe8ff"/></svg><span class="t" style="left:19px">EOX Maps - Sentinel-2 cloudless layer for 2020 by EOX - 4326</span></div>
<div class="hdot" style="left:31px;top:651px;width:12px"></div>
<div class="row" style="left:44px;top:641px"><svg class="ic" width="17" height="14" viewBox="0 0 17 14"><rect x="0.5" y="0.5" width="15" height="12.5" fill="#fff" stroke="#7a7a7a"/><rect x="2" y="2" width="12" height="9.5" fill="#3b8fd8"/><path d="M2 11.5 L2 8.5 L5.5 6 L8 8.5 L11 6 L14 8.5 L14 11.5Z" fill="#5b5b5b"/><circle cx="4.5" cy="4" r="0.8" fill="#cfe8ff"/><path d="M8.3 2.8 A1.6 1.6 0 1 0 8.3 5.8" fill="none" stroke="#e0f0ff" stroke-width="0.8"/><circle cx="12" cy="3.5" r="0.7" fill="#cfe8ff"/></svg><span class="t" style="left:19px">EOX Maps - Sentinel-2 cloudless layer for 2021 by EOX - 3857</span></div>
<div class="hdot" style="left:31px;top:669px;width:12px"></div>
<div class="row" style="left:44px;top:659px"><svg class="ic" width="17" height="14" viewBox="0 0 17 14"><rect x="0.5" y="0.5" width="15" height="12.5" fill="#fff" stroke="#7a7a7a"/><rect x="2" y="2" width="12" height="9.5" fill="#3b8fd8"/><path d="M2 11.5 L2 8.5 L5.5 6 L8 8.5 L11 6 L14 8.5 L14 11.5Z" fill="#5b5b5b"/><circle cx="4.5" cy="4" r="0.8" fill="#cfe8ff"/><path d="M8.3 2.8 A1.6 1.6 0 1 0 8.3 5.8" fill="none" stroke="#e0f0ff" stroke-width="0.8"/><circle cx="12" cy="3.5" r="0.7" fill="#cfe8ff"/></svg><span class="t" style="left:19px">EOX Maps - Sentinel-2 cloudless layer for 2021 by EOX - 4326</span></div>
<div class="hdot" style="left:31px;top:687px;width:12px"></div>
<div class="row" style="left:44px;top:677px"><svg class="ic" width="17" height="14" viewBox="0 0 17 14"><rect x="0.5" y="0.5" width="15" height="12.5" fill="#fff" stroke="#7a7a7a"/><rect x="2" y="2" width="12" height="9.5" fill="#3b8fd8"/><path d="M2 11.5 L2 8.5 L5.5 6 L8 8.5 L11 6 L14 8.5 L14 11.5Z" fill="#5b5b5b"/><circle cx="4.5" cy="4" r="0.8" fill="#cfe8ff"/><path d="M8.3 2.8 A1.6 1.6 0 1 0 8.3 5.8" fill="none" stroke="#e0f0ff" stroke-width="0.8"/><circle cx="12" cy="3.5" r="0.7" fill="#cfe8ff"/></svg><span class="t" style="left:19px">EOX Maps - Sentinel-2 cloudless layer for 2022 by EOX - 3857</span></div>
<div class="hdot" style="left:31px;top:705px;width:12px"></div>
<div class="row" style="left:44px;top:695px"><svg class="ic" width="17" height="14" viewBox="0 0 17 14"><rect x="0.5" y="0.5" width="15" height="12.5" fill="#fff" stroke="#7a7a7a"/><rect x="2" y="2" width="12" height="9.5" fill="#3b8fd8"/><path d="M2 11.5 L2 8.5 L5.5 6 L8 8.5 L11 6 L14 8.5 L14 11.5Z" fill="#5b5b5b"/><circle cx="4.5" cy="4" r="0.8" fill="#cfe8ff"/><path d="M8.3 2.8 A1.6 1.6 0 1 0 8.3 5.8" fill="none" stroke="#e0f0ff" stroke-width="0.8"/><circle cx="12" cy="3.5" r="0.7" fill="#cfe8ff"/></svg><span class="t" style="left:19px">EOX Maps - Sentinel-2 cloudless layer for 2022 by EOX - 4326</span></div>
<div class="hdot" style="left:31px;top:723px;width:12px"></div>
<div class="row" style="left:44px;top:713px"><svg class="ic" width="17" height="14" viewBox="0 0 17 14"><rect x="0.5" y="0.5" width="15" height="12.5" fill="#fff" stroke="#7a7a7a"/><rect x="2" y="2" width="12" height="9.5" fill="#3b8fd8"/><path d="M2 11.5 L2 8.5 L5.5 6 L8 8.5 L11 6 L14 8.5 L14 11.5Z" fill="#5b5b5b"/><circle cx="4.5" cy="4" r="0.8" fill="#cfe8ff"/><path d="M8.3 2.8 A1.6 1.6 0 1 0 8.3 5.8" fill="none" stroke="#e0f0ff" stroke-width="0.8"/><circle cx="12" cy="3.5" r="0.7" fill="#cfe8ff"/></svg><span class="t" style="left:19px">EOX Maps - Sentinel-2 cloudless layer for 2023 by EOX - 3857</span></div>
<div class="hdot" style="left:31px;top:741px;width:12px"></div>
<div class="row" style="left:44px;top:731px"><svg class="ic" width="17" height="14" viewBox="0 0 17 14"><rect x="0.5" y="0.5" width="15" height="12.5" fill="#fff" stroke="#7a7a7a"/><rect x="2" y="2" width="12" height="9.5" fill="#3b8fd8"/><path d="M2 11.5 L2 8.5 L5.5 6 L8 8.5 L11 6 L14 8.5 L14 11.5Z" fill="#5b5b5b"/><circle cx="4.5" cy="4" r="0.8" fill="#cfe8ff"/><path d="M8.3 2.8 A1.6 1.6 0 1 0 8.3 5.8" fill="none" stroke="#e0f0ff" stroke-width="0.8"/><circle cx="12" cy="3.5" r="0.7" fill="#cfe8ff"/></svg><span class="t" style="left:19px">EOX Maps - Sentinel-2 cloudless layer for 2023 by EOX - 4326</span></div>
<div class="hdot" style="left:31px;top:759px;width:12px"></div>
<div class="row" style="left:44px;top:749px"><svg class="ic" width="17" height="14" viewBox="0 0 17 14"><rect x="0.5" y="0.5" width="15" height="12.5" fill="#fff" stroke="#7a7a7a"/><rect x="2" y="2" width="12" height="9.5" fill="#3b8fd8"/><path d="M2 11.5 L2 8.5 L5.5 6 L8 8.5 L11 6 L14 8.5 L14 11.5Z" fill="#5b5b5b"/><circle cx="4.5" cy="4" r="0.8" fill="#cfe8ff"/><path d="M8.3 2.8 A1.6 1.6 0 1 0 8.3 5.8" fill="none" stroke="#e0f0ff" stroke-width="0.8"/><circle cx="12" cy="3.5" r="0.7" fill="#cfe8ff"/></svg><span class="t" style="left:19px">EOX Maps - Sentinel-2 cloudless layer for 2024 by EOX - 3857</span></div>
<div class="hdot" style="left:31px;top:777px;width:12px"></div>
<div class="row" style="left:44px;top:767px"><svg class="ic" width="17" height="14" viewBox="0 0 17 14"><rect x="0.5" y="0.5" width="15" height="12.5" fill="#fff" stroke="#7a7a7a"/><rect x="2" y="2" width="12" height="9.5" fill="#3b8fd8"/><path d="M2 11.5 L2 8.5 L5.5 6 L8 8.5 L11 6 L14 8.5 L14 11.5Z" fill="#5b5b5b"/><circle cx="4.5" cy="4" r="0.8" fill="#cfe8ff"/><path d="M8.3 2.8 A1.6 1.6 0 1 0 8.3 5.8" fill="none" stroke="#e0f0ff" stroke-width="0.8"/><circle cx="12" cy="3.5" r="0.7" fill="#cfe8ff"/></svg><span class="t" style="left:19px">EOX Maps - Sentinel-2 cloudless layer for 2024 by EOX - 4326</span></div>
<div class="hdot" style="left:31px;top:795px;width:12px"></div>
<div class="row" style="left:44px;top:785px"><svg class="ic" width="17" height="14" viewBox="0 0 17 14"><rect x="0.5" y="0.5" width="15" height="12.5" fill="#fff" stroke="#7a7a7a"/><rect x="2" y="2" width="12" height="9.5" fill="#3b8fd8"/><path d="M2 11.5 L2 8.5 L5.5 6 L8 8.5 L11 6 L14 8.5 L14 11.5Z" fill="#5b5b5b"/><circle cx="4.5" cy="4" r="0.8" fill="#cfe8ff"/><path d="M8.3 2.8 A1.6 1.6 0 1 0 8.3 5.8" fill="none" stroke="#e0f0ff" stroke-width="0.8"/><circle cx="12" cy="3.5" r="0.7" fill="#cfe8ff"/></svg><span class="t" style="left:19px">EOX Maps - Streets overlay layer by EOX - 3857</span></div>
<div class="hdot" style="left:31px;top:813px;width:12px"></div>
<div class="row" style="left:44px;top:803px"><svg class="ic" width="17" height="14" viewBox="0 0 17 14"><rect x="0.5" y="0.5" width="15" height="12.5" fill="#fff" stroke="#7a7a7a"/><rect x="2" y="2" width="12" height="9.5" fill="#3b8fd8"/><path d="M2 11.5 L2 8.5 L5.5 6 L8 8.5 L11 6 L14 8.5 L14 11.5Z" fill="#5b5b5b"/><circle cx="4.5" cy="4" r="0.8" fill="#cfe8ff"/><path d="M8.3 2.8 A1.6 1.6 0 1 0 8.3 5.8" fill="none" stroke="#e0f0ff" stroke-width="0.8"/><circle cx="12" cy="3.5" r="0.7" fill="#cfe8ff"/></svg><span class="t" style="left:19px">EOX Maps - Streets overlay layer by EOX - 4326</span></div>
<div class="hdot" style="left:31px;top:831px;width:12px"></div>
<div class="row" style="left:44px;top:821px"><svg class="ic" width="17" height="14" viewBox="0 0 17 14"><rect x="0.5" y="0.5" width="15" height="12.5" fill="#fff" stroke="#7a7a7a"/><rect x="2" y="2" width="12" height="9.5" fill="#3b8fd8"/><path d="M2 11.5 L2 8.5 L5.5 6 L8 8.5 L11 6 L14 8.5 L14 11.5Z" fill="#5b5b5b"/><circle cx="4.5" cy="4" r="0.8" fill="#cfe8ff"/><path d="M8.3 2.8 A1.6 1.6 0 1 0 8.3 5.8" fill="none" stroke="#e0f0ff" stroke-width="0.8"/><circle cx="12" cy="3.5" r="0.7" fill="#cfe8ff"/></svg><span class="t" style="left:19px">EOX Maps - Terrain background layer by EOX - 3857</span></div>
<div class="hdot" style="left:31px;top:849px;width:12px"></div>
<div class="row" style="left:44px;top:839px"><svg class="ic" width="17" height="14" viewBox="0 0 17 14"><rect x="0.5" y="0.5" width="15" height="12.5" fill="#fff" stroke="#7a7a7a"/><rect x="2" y="2" width="12" height="9.5" fill="#3b8fd8"/><path d="M2 11.5 L2 8.5 L5.5 6 L8 8.5 L11 6 L14 8.5 L14 11.5Z" fill="#5b5b5b"/><circle cx="4.5" cy="4" r="0.8" fill="#cfe8ff"/><path d="M8.3 2.8 A1.6 1.6 0 1 0 8.3 5.8" fill="none" stroke="#e0f0ff" stroke-width="0.8"/><circle cx="12" cy="3.5" r="0.7" fill="#cfe8ff"/></svg><span class="t" style="left:19px">EOX Maps - Terrain background layer by EOX - 4326</span></div>
<div class="hdot" style="left:31px;top:867px;width:12px"></div>
<div class="row" style="left:44px;top:857px"><svg class="ic" width="17" height="14" viewBox="0 0 17 14"><rect x="0.5" y="0.5" width="15" height="12.5" fill="#fff" stroke="#7a7a7a"/><rect x="2" y="2" width="12" height="9.5" fill="#3b8fd8"/><path d="M2 11.5 L2 8.5 L5.5 6 L8 8.5 L11 6 L14 8.5 L14 11.5Z" fill="#5b5b5b"/><circle cx="4.5" cy="4" r="0.8" fill="#cfe8ff"/><path d="M8.3 2.8 A1.6 1.6 0 1 0 8.3 5.8" fill="none" stroke="#e0f0ff" stroke-width="0.8"/><circle cx="12" cy="3.5" r="0.7" fill="#cfe8ff"/></svg><span class="t" style="left:19px">EOX Maps - Terrain Light background layer by EOX - 3857</span></div>
<div class="hdot" style="left:31px;top:885px;width:12px"></div>
<div class="row" style="left:44px;top:875px"><svg class="ic" width="17" height="14" viewBox="0 0 17 14"><rect x="0.5" y="0.5" width="15" height="12.5" fill="#fff" stroke="#7a7a7a"/><rect x="2" y="2" width="12" height="9.5" fill="#3b8fd8"/><path d="M2 11.5 L2 8.5 L5.5 6 L8 8.5 L11 6 L14 8.5 L14 11.5Z" fill="#5b5b5b"/><circle cx="4.5" cy="4" r="0.8" fill="#cfe8ff"/><path d="M8.3 2.8 A1.6 1.6 0 1 0 8.3 5.8" fill="none" stroke="#e0f0ff" stroke-width="0.8"/><circle cx="12" cy="3.5" r="0.7" fill="#cfe8ff"/></svg><span class="t" style="left:19px">EOX Maps - Terrain Light background layer by EOX - 4326</span></div>
<div class="box" style="left:4px;top:899px"><div class="minus"></div><div class="plus"></div></div>
<div class="hdot" style="left:14px;top:903px;width:8px"></div>
<div class="row" style="left:22px;top:893px"><svg class="fi" width="17" height="14" viewBox="0 0 17 14"><path d="M0.5 1.5 Q0.5 0.5 1.5 0.5 L6 0.5 L7.5 2 L14.5 2 Q15.5 2 15.5 3 L15.5 12.5 Q15.5 13.5 14.5 13.5 L1.5 13.5 Q0.5 13.5 0.5 12.5Z" fill="#fbd971" stroke="#e0b23a"/></svg><span class="t" style="left:19px">Esri Netherlands Content</span></div>
<div class="box" style="left:4px;top:917px"><div class="minus"></div><div class="plus"></div></div>
<div class="hdot" style="left:14px;top:921px;width:8px"></div>
<div class="row" style="left:22px;top:911px"><svg class="fi" width="17" height="14" viewBox="0 0 17 14"><path d="M0.5 1.5 Q0.5 0.5 1.5 0.5 L6 0.5 L7.5 2 L14.5 2 Q15.5 2 15.5 3 L15.5 12.5 Q15.5 13.5 14.5 13.5 L1.5 13.5 Q0.5 13.5 0.5 12.5Z" fill="#fbd971" stroke="#e0b23a"/></svg><span class="t" style="left:19px">FINN Kart</span></div>
<div class="box" style="left:4px;top:935px"><div class="minus"></div><div class="plus"></div></div>
<div class="hdot" style="left:14px;top:939px;width:8px"></div>
<div class="row" style="left:22px;top:929px"><svg class="fi" width="17" height="14" viewBox="0 0 17 14"><path d="M0.5 1.5 Q0.5 0.5 1.5 0.5 L6 0.5 L7.5 2 L14.5 2 Q15.5 2 15.5 3 L15.5 12.5 Q15.5 13.5 14.5 13.5 L1.5 13.5 Q0.5 13.5 0.5 12.5Z" fill="#fbd971" stroke="#e0b23a"/></svg><span class="t" style="left:19px">Freemap Slovakia</span></div>
<div class="box" style="left:4px;top:953px"><div class="minus"></div><div class="plus"></div></div>
<div class="hdot" style="left:14px;top:957px;width:8px"></div>
<div class="row" style="left:22px;top:947px"><svg class="fi" width="17" height="14" viewBox="0 0 17 14"><path d="M0.5 1.5 Q0.5 0.5 1.5 0.5 L6 0.5 L7.5 2 L14.5 2 Q15.5 2 15.5 3 L15.5 12.5 Q15.5 13.5 14.5 13.5 L1.5 13.5 Q0.5 13.5 0.5 12.5Z" fill="#fbd971" stroke="#e0b23a"/></svg><span class="t" style="left:19px">FY-3D Global Image</span></div>
<div class="box" style="left:4px;top:971px"><div class="minus"></div><div class="plus"></div></div>
<div class="hdot" style="left:14px;top:975px;width:8px"></div>
<div class="row" style="left:22px;top:965px"><svg class="fi" width="17" height="14" viewBox="0 0 17 14"><path d="M0.5 1.5 Q0.5 0.5 1.5 0.5 L6 0.5 L7.5 2 L14.5 2 Q15.5 2 15.5 3 L15.5 12.5 Q15.5 13.5 14.5 13.5 L1.5 13.5 Q0.5 13.5 0.5 12.5Z" fill="#fbd971" stroke="#e0b23a"/></svg><span class="t" style="left:19px">GAIA GPS Maps</span></div>
<div class="box" style="left:4px;top:989px"><div class="minus"></div><div class="plus"></div></div>
<div class="hdot" style="left:14px;top:993px;width:8px"></div>
<div class="row" style="left:22px;top:983px"><svg class="fi" width="17" height="14" viewBox="0 0 17 14"><path d="M0.5 1.5 Q0.5 0.5 1.5 0.5 L6 0.5 L7.5 2 L14.5 2 Q15.5 2 15.5 3 L15.5 12.5 Q15.5 13.5 14.5 13.5 L1.5 13.5 Q0.5 13.5 0.5 12.5Z" fill="#fbd971" stroke="#e0b23a"/></svg><span class="t" style="left:19px">Gaode Map (www.amap.com China)</span></div>
<div class="box" style="left:4px;top:1007px"><div class="minus"></div><div class="plus"></div></div>
<div class="hdot" style="left:14px;top:1011px;width:8px"></div>
<div class="row" style="left:22px;top:1001px"><svg class="fi" width="17" height="14" viewBox="0 0 17 14"><path d="M0.5 1.5 Q0.5 0.5 1.5 0.5 L6 0.5 L7.5 2 L14.5 2 Q15.5 2 15.5 3 L15.5 12.5 Q15.5 13.5 14.5 13.5 L1.5 13.5 Q0.5 13.5 0.5 12.5Z" fill="#fbd971" stroke="#e0b23a"/></svg><span class="t" style="left:19px">GeaMap.com</span></div>
</div></div>
<div class="abs" style="left:453px;top:83px;width:1px;height:930px;background:#fbfefb"></div>
<div class="abs" style="left:461px;top:214px;width:2px;height:161px;background:#7a7a7a"></div>
<div id="tb">
 <div class="b" style="left:0;top:0;width:1px;height:29px;background:#fff"></div>
 <svg class="b" style="left:12px;top:6px" width="17" height="16" viewBox="0 0 17 16"><circle cx="6.5" cy="6.2" r="5.2" fill="#fff" stroke="#000070" stroke-width="1.7"/><path d="M3.8 6.2h5.4M6.5 3.5v5.4" stroke="#000070" stroke-width="2"/><path d="M10.3 10l4.5 4.5" stroke="#000070" stroke-width="2.4" stroke-linecap="round"/></svg>
 <span class="b" style="left:32px;top:8px">Zoom in</span>
 <svg class="b" style="left:98px;top:6px" width="17" height="16" viewBox="0 0 17 16"><circle cx="6.5" cy="6.2" r="5.2" fill="#fff" stroke="#000070" stroke-width="1.7"/><path d="M3.8 6.2h5.4" stroke="#000070" stroke-width="2"/><path d="M10.3 10l4.5 4.5" stroke="#000070" stroke-width="2.4" stroke-linecap="round"/></svg>
 <span class="b" style="left:119px;top:8px">Zoom out</span>
 <div class="b" style="left:184px;top:3px;width:1px;height:23px;background:#a0a0a0"></div>
 <div class="b" style="left:185px;top:3px;width:1px;height:23px;background:#fff"></div>
 <div class="b" style="left:189px;top:2px;width:89px;height:22px;border:1px solid #d4d4d4;border-top-color:#a8a8a8;border-left-color:#a8a8a8;background:#f4f4f4"></div>
 <svg class="b" style="left:202px;top:8px" width="14" height="15" viewBox="0 0 14 15"><path d="M3 9 V4 Q3 3 4 3 Q5 3 5 4 V8 V2 Q5 1 6 1 Q7 1 7 2 V8 V2.5 Q7 1.5 8 1.5 Q9 1.5 9 2.5 V8 V4 Q9 3 10 3 Q11 3 11 4 V10 Q11 14 7.5 14.5 Q4.5 14.5 3 12 L1 9 Q0.5 8 1.5 7.5 Q2.5 7.5 3 9" fill="#fff" stroke="#444" stroke-width="0.7"/></svg>
 <span class="b" style="left:220px;top:9px">Pan map</span>
 <svg class="b" style="left:286px;top:6px" width="16" height="16" viewBox="0 0 16 16"><rect x="1" y="1" width="13" height="13" rx="2.5" fill="none" stroke="#333" stroke-width="1.2" stroke-dasharray="3.2 2.2"/></svg>
 <span class="b" style="left:306px;top:8px">Rectangle</span>
 <div class="b" style="left:377px;top:2px;width:280px;height:22px;background:#fff"></div>
 <svg class="b" style="left:664px;top:5px" width="15" height="17" viewBox="0 0 15 17"><path d="M7.5 1V11.5M3.5 8L7.5 12L11.5 8M1 11.5V15H14V11.5" fill="none" stroke="#555" stroke-width="1.1"/></svg>
 <span class="b" style="left:684px;top:8px">Download</span>
</div>
<div id="map"><svg width="1444" height="937" viewBox="0 0 1444 937" style="position:absolute;left:0;top:1px"><g fill="none" stroke="#f8bc92" stroke-width="1.4" stroke-linejoin="round" transform="translate(0.35 0.35)"><path d="M304.0 0.0 L304.6 6.2 L301.5 15.5 L300.7 21.7 L303.0 28.7 L307.7 29.5"/><path d="M307.7 29.5 L310.8 32.6 L320.0 31.8 L331.0 27.9 L340.3 30.2 L346.5 27.1 L349.6 25.6 L355.8 21.0 L360.4 20.2 L366.6 23.3 L376.0 23.3 L386.8 27.9 L394.5 33.3"/><path d="M349.6 25.6 L343.4 21.7 L345.0 17.0 L351.0 14.7 L354.0 17.0 L352.7 23.3 L348.0 28.0"/><path d="M307.7 29.5 L303.0 32.6 L300.0 37.2 L287.6 38.0 L286.0 34.9 L276.7 34.9 L272.0 44.2 L276.7 46.5 L273.6 51.2 L262.8 63.6 L251.0 72.9 L252.0 83.7 L236.4 97.7 L238.7 108.5 L230.2 121.0 L231.8 126.4 L241.8 123.3 L244.0 114.7 L255.0 105.4 L267.4 107.0 L270.5 117.8 L275.2 130.2 L279.0 139.5 L275.2 145.0 L269.0 148.8 L270.5 155.0 L275.2 160.0 L276.6 161.0 L284.6 174.6 L281.0 183.7 L270.0 188.0 L260.8 192.7 L265.0 204.0 L276.6 211.0 L280.0 220.0 L272.0 234.0"/><path d="M279.0 139.5 L286.0 141.1 L293.8 138.0 L304.6 136.4 L315.5 134.9 L323.2 128.7 L332.5 114.7 L338.7 107.0 L343.4 105.4 L343.4 116.3 L349.6 124.0 L358.9 130.2 L363.5 136.4 L366.6 141.1 L365.0 145.0 L370.5 144.2 L369.7 136.4 L377.5 122.5 L380.6 107.0 L385.2 100.8 L389.9 102.3 L391.4 111.6 L396.1 114.7 L410.0 110.0 L417.8 113.2 L419.3 119.4 L422.4 117.8 L417.8 108.5 L422.4 96.1 L428.7 93.0 L435.6 97.7 L434.9 82.2 L431.8 74.4 L425.6 79.0 L414.7 76.0 L410.0 68.2 L399.2 65.0 L391.4 63.6 L393.0 55.8 L391.4 49.6 L397.6 40.3 L394.5 33.3"/><path d="M394.5 33.3 L403.8 31.0 L405.4 28.7 L410.0 34.0 L416.2 38.8 L422.4 45.0 L425.6 49.6 L433.3 43.4 L434.9 31.0 L441.0 31.0 L447.0 34.0 L455.0 33.3 L457.5 41.0 L469.7 41.0 L478.4 35.8 L489.0 29.7 L504.6 27.0 L513.3 26.2 L515.0 20.0 L523.8 22.7 L539.5 23.6 L543.0 31.4 L551.7 37.5 L555.2 24.4 L550.0 17.5 L549.0 7.0 L544.8 0.0"/><path d="M431.8 74.4 L439.5 79.0 L448.8 80.6 L454.0 83.8 L461.0 84.6 L464.5 75.0 L473.2 70.7 L489.0 68.0 L513.3 63.7 L509.8 68.0 L516.8 76.8 L521.2 86.4 L537.8 92.5 L558.7 96.9 L583.0 100.4 L602.3 104.7 L618.0 104.7 L621.5 110.0 L635.5 94.2 L660.0 90.8 L667.0 88.0 L679.0 86.4 L687.9 90.0 L686.0 80.3 L694.8 76.8 L705.3 71.6 L708.8 66.3 L705.3 61.0 L707.0 52.4 L706.2 41.9 L714.0 40.0 L717.5 33.0 L715.8 26.2 L707.0 22.7 L710.5 16.6 L721.0 17.5 L734.0 20.0"/><path d="M583.0 100.4 L581.4 104.7 L567.4 115.2 L569.2 120.4 L579.7 124.0 L574.4 132.6 L578.0 138.0 L578.0 148.3 L590.0 155.3 L590.0 158.8 L581.4 158.0 L569.2 162.3 L560.5 170.0 L544.8 176.3 L542.4 197.0 L531.0 226.8 L528.8 234.0"/><path d="M560.5 170.0 L562.8 186.0 L571.9 208.6 L592.0 234.0"/><path d="M569.2 162.3 L576.2 167.5 L591.9 171.9 L607.6 168.4 L621.5 157.0 L628.5 165.8 L639.0 170.0 L651.2 171.9 L658.2 169.3 L656.4 160.6 L658.2 153.6 L672.2 144.9 L674.0 130.9 L670.4 122.2 L686.0 115.2 L700.0 110.0 L700.0 101.2 L705.3 99.5 L705.3 90.8 L694.8 76.8"/><path d="M722.0 186.0 L708.0 188.0 L701.0 199.5 L692.0 195.0 L683.0 186.0 L677.0 189.0 L676.0 211.0 L687.5 226.8 L694.0 234.0"/><path d="M722.0 21.5 L735.6 20.4 L733.0 11.3 L738.0 3.4 L744.7 0.0 L751.5 4.5 L767.0 18.0 L808.0 17.0 L816.0 12.5 L812.7 6.8 L815.0 0.0"/><path d="M1003.0 0.0 L998.6 4.5 L994.0 11.3 L980.5 16.0 L973.7 18.0 L967.0 28.3 L960.0 36.3 L958.0 45.4 L946.5 65.8 L939.7 81.6 L935.0 90.7 L928.0 97.5 L926.0 108.8 L919.0 115.6 L905.7 116.8 L898.9 124.7 L880.7 127.0 L867.0 123.6 L851.0 123.6 L837.6 135.0 L826.0 136.0 L815.0 140.6"/><path d="M1005.5 0.0 L1023.6 0.0 L1030.0 2.0 L1046.0 4.5 L1062.0 9.0 L1075.7 4.5 L1083.0 11.3"/><path d="M722.0 108.8 L740.0 122.4 L747.0 136.0 L758.0 138.3 L772.0 147.4 L796.8 150.8 L809.3 140.6 L815.0 140.6"/><path d="M880.7 127.0 L884.0 133.8 L894.0 142.9 L905.7 150.8 L904.5 167.8 L914.7 178.0 L926.0 183.7 L937.4 189.3 L933.0 199.5 L939.7 206.4 L931.8 212.0 L942.0 217.7 L957.8 223.4 L969.0 234.0"/><path d="M957.8 223.4 L969.0 228.0 L980.5 218.8 L994.0 227.9 L980.5 234.0"/><path d="M815.0 140.6 L819.5 154.0 L821.8 165.5 L826.3 174.6 L833.0 181.4 L844.4 186.0 L833.0 188.2 L828.6 199.5 L830.8 205.0 L840.0 207.5 L835.4 226.8 L830.8 234.0"/><path d="M722.0 188.2 L728.8 183.7 L740.0 188.2 L753.7 191.6 L767.4 195.0 L776.4 191.6 L787.8 193.9 L808.0 195.0 L812.7 204.0 L817.0 208.6 L828.6 205.0"/><path d="M1083.0 10.2 L1089.8 18.0 L1098.9 20.4 L1108.0 8.0 L1151.0 2.3 L1153.0 0.0"/><path d="M1191.8 0.0 L1196.4 9.0 L1201.0 22.7 L1212.0 36.3 L1214.5 45.4 L1223.6 54.4 L1225.9 61.2 L1237.0 70.3 L1239.5 79.4 L1245.0 93.0 L1243.0 106.6 L1239.5 120.2 L1237.0 136.0 L1239.5 158.7 L1241.7 167.8 L1248.5 179.0 L1266.7 186.0 L1271.2 179.0 L1282.5 174.6 L1296.0 172.3 L1307.5 176.9 L1309.8 188.2 L1325.6 193.9 L1337.0 195.0 L1346.0 183.7 L1341.5 174.6 L1328.0 170.0 L1328.0 165.5 L1373.0 108.8 L1380.0 107.7 L1382.3 120.2 L1391.4 129.3 L1444.0 142.9"/><path d="M1273.5 0.0 L1287.0 2.3 L1291.6 11.3 L1288.0 22.7 L1286.0 34.0 L1296.0 40.8 L1305.0 44.2 L1305.0 61.2 L1307.5 72.6 L1321.0 79.4 L1323.4 97.5 L1331.3 107.7 L1318.8 111.0 L1309.8 106.6 L1300.7 104.3 L1289.4 107.7 L1288.0 99.8 L1278.0 103.2 L1282.5 120.2 L1275.7 136.0 L1269.0 139.5 L1267.8 147.4 L1257.6 154.2 L1256.5 169.0 L1246.3 167.8 L1239.5 158.7"/><path d="M1325.6 193.9 L1323.4 204.0 L1314.0 220.0 L1287.0 234.0"/><path d="M1444.0 154.2 L1430.0 163.3 L1425.4 174.6 L1430.0 186.0 L1444.0 190.5"/><path d="M272.0 234.0 L272.0 238.5 L277.8 248.7 L294.8 256.7 L308.4 253.3 L309.5 257.8 L300.5 271.4 L303.0 289.6"/><path d="M297.0 279.0 L299.5 292.0 L301.6 292.0 L299.0 278.0"/><path d="M301.6 293.0 L305.0 289.6 L333.0 280.5 L342.4 272.5 L356.0 251.0 L361.0 251.0"/><path d="M301.6 293.0 L275.5 312.2 L272.0 322.4 L256.0 337.0 L240.0 339.4 L215.4 331.5 L211.0 328.0 L192.7 324.7 L183.7 318.0 L167.8 315.6 L140.6 306.6 L124.7 320.0 L113.4 321.3 L110.0 329.2 L108.8 345.0 L113.4 354.2 L115.6 362.0 L121.3 362.0 L123.6 370.0 L118.0 392.7 L99.8 413.0 L81.6 424.5 L61.2 440.4 L22.7 452.8 L11.3 468.0"/><path d="M0.0 338.3 L9.0 338.3 L13.6 342.8 L21.5 342.8 L25.0 347.4 L22.7 354.2 L25.0 359.9 L34.0 358.7 L45.4 357.6 L51.0 365.5 L61.2 361.0 L72.6 366.7 L79.4 365.5 L80.5 362.0 L93.0 357.6 L99.8 361.0 L115.6 361.0"/><path d="M361.0 336.0 L347.0 342.8 L335.6 361.0 L338.0 397.3 L347.0 415.4 L361.0 433.5"/><path d="M361.0 434.7 L335.6 429.0 L324.0 438.0 L317.5 468.0"/><path d="M361.0 251.0 L381.4 259.0 L401.8 272.5 L408.6 274.8 L412.0 281.6 L399.5 293.0 L395.0 313.4 L386.0 312.2 L374.6 318.0 L371.2 329.2 L361.0 336.0"/><path d="M395.0 313.4 L395.0 315.6 L398.4 329.2 L403.0 340.6 L404.0 352.0 L406.4 372.3 L401.8 390.5 L398.4 404.0 L396.0 422.2 L383.7 429.0 L379.0 429.0 L361.0 433.5"/><path d="M406.4 372.3 L426.8 380.3 L451.7 380.3 L485.7 391.6 L519.7 420.0 L533.3 456.0 L547.0 468.0"/><path d="M396.0 422.2 L406.4 438.0 L415.4 454.0 L415.4 468.0"/><path d="M532.0 234.0 L533.3 243.0 L547.0 255.5 L572.0 273.7 L585.5 279.4 L594.6 295.2 L603.6 324.7 L609.4 342.3 L625.7 360.0 L643.3 373.5 L661.0 368.0 L673.2 362.7 L682.7 365.4 L685.4 368.0 L686.8 377.6 L692.2 381.7 L704.4 388.5 L707.0 395.3 L708.5 405.0 L711.3 420.0 L722.0 424.5"/><path d="M592.3 234.0 L610.4 247.6 L628.4 265.0 L644.7 285.4 L661.0 297.6 L684.0 311.1 L671.8 312.5 L661.0 308.4 L655.6 309.8 L652.8 328.8 L671.8 337.0 L696.3 338.3 L697.6 345.0 L701.7 351.8 L709.8 353.2 L722.0 354.2"/><path d="M709.8 354.6 L699.0 356.0 L689.5 358.6 L686.8 365.4 L690.8 373.5 L701.7 376.3 L711.2 372.2 L712.5 362.7 L709.8 354.6"/><path d="M694.3 234.0 L696.6 245.3 L708.0 259.0 L712.5 265.0 L722.0 277.0"/><path d="M828.6 234.0 L831.0 243.0 L845.6 254.4 L852.4 260.0 L851.3 265.7 L835.4 263.5 L840.0 272.5 L847.8 279.4 L846.7 289.6 L835.4 290.7 L834.2 294.0"/><path d="M834.2 294.0 L821.8 294.0 L827.4 304.3 L820.6 307.7 L811.6 308.8 L808.2 322.4 L800.2 327.0 L800.2 342.8 L803.6 352.0 L799.0 367.8 L799.0 373.5"/><path d="M722.0 277.0 L744.7 295.2 L747.0 304.3 L764.0 322.4 L758.3 331.5 L769.6 333.8 L781.0 342.8 L796.8 349.6 L800.2 352.0"/><path d="M834.2 294.0 L846.7 304.3 L858.0 315.6 L867.0 320.2 L876.2 327.0 L885.3 332.6 L871.7 340.6 L872.8 352.0 L860.3 358.7 L857.0 349.6 L837.6 375.7 L841.0 390.5 L837.6 401.8"/><path d="M885.3 332.6 L892.0 327.0 L898.9 320.2 L896.6 312.2 L906.8 308.8 L910.2 315.6 L921.5 318.0 L927.2 331.5 L935.0 335.0 L935.0 341.7 L948.8 345.0 L947.6 354.2 L939.7 365.5 L940.8 370.0"/><path d="M872.8 352.0 L880.7 365.5 L892.0 374.6 L897.7 388.2 L896.6 395.0 L902.3 393.9 L903.4 383.7 L919.3 375.7 L926.0 381.4 L930.6 372.3 L940.8 370.0 L957.8 365.5 L973.7 364.4"/><path d="M980.5 234.0 L989.6 247.6 L978.2 262.3 L976.0 274.8 L982.8 297.5 L1004.3 315.6 L989.6 333.8 L980.5 339.4 L982.8 356.4 L973.7 365.5"/><path d="M991.8 249.9 L1007.7 259.0 L998.6 268.0 L1001.0 274.8 L1028.0 273.7 L1057.6 281.6 L1075.7 278.2 L1083.0 282.8"/><path d="M973.7 365.5 L981.6 374.6 L998.6 384.8 L1007.7 406.3 L1005.5 429.0 L994.0 431.3 L992.0 440.4 L971.4 439.2 L948.8 451.7 L935.0 456.2 L914.7 457.4 L903.4 452.8 L897.7 441.5 L892.0 431.3 L889.8 415.4 L894.3 397.3 L896.6 395.0"/><path d="M1005.5 429.0 L1016.8 426.7 L1039.5 420.0 L1055.3 417.7 L1062.0 415.4 L1075.7 415.4 L1083.0 422.2"/><path d="M914.7 457.4 L917.0 468.0"/><path d="M837.6 401.8 L835.4 415.4 L837.6 433.5 L833.0 460.8 L832.0 468.0"/><path d="M722.0 354.2 L744.7 353.0 L767.4 357.6 L790.0 367.8 L812.7 383.7 L821.8 395.0 L835.4 401.8"/><path d="M722.0 426.7 L744.7 438.0 L767.4 451.7 L790.0 468.0"/><path d="M1083.0 282.8 L1094.3 280.5 L1101.0 282.8 L1108.0 282.8 L1114.7 287.3 L1131.8 281.6 L1148.8 263.5 L1189.6 253.3 L1199.8 254.4 L1205.4 262.3 L1216.8 261.2 L1220.2 264.6 L1229.3 262.3 L1233.8 273.7 L1253.0 279.4 L1271.2 279.4"/><path d="M1284.8 234.0 L1271.2 279.4 L1273.5 293.0 L1259.9 313.4 L1246.3 314.5 L1240.6 327.0 L1237.2 367.8 L1246.3 383.7 L1247.4 389.3 L1228.0 389.3 L1224.7 388.2 L1213.4 392.7 L1199.8 381.4 L1189.6 382.5 L1182.8 388.2 L1169.2 390.5 L1157.8 397.3 L1157.8 404.0 L1148.8 404.0 L1146.5 406.3 L1151.0 420.0 L1148.8 426.7 L1137.4 429.0 L1123.8 430.2 L1110.2 434.7 L1087.5 424.5 L1083.0 423.3"/><path d="M1157.8 404.0 L1169.2 410.9 L1170.3 426.7 L1157.8 433.5 L1156.7 449.4 L1151.0 460.8 L1139.7 468.0"/><path d="M1247.4 389.3 L1250.8 408.6 L1278.0 421.0 L1325.6 429.0 L1337.0 424.5 L1368.7 432.4 L1376.7 429.0 L1380.0 418.8 L1430.0 388.2 L1444.0 386.0"/><path d="M11.3 468.0 L0.0 479.3"/><path d="M0.0 506.5 L3.4 513.4 L0.0 524.7"/><path d="M52.3 535.0 L53.0 529.0 L59.0 521.5 L71.0 512.0 L86.0 504.3 L108.8 499.7 L114.0 501.5 L119.0 508.8 L124.7 496.3 L144.0 490.7 L156.5 494.0 L164.2 505.0 L167.2 514.0 L166.5 521.5 L162.7 529.0 L153.7 532.0 L129.7 524.5 L125.0 533.5 L119.0 542.5 L110.0 556.0 L99.6 568.8 L90.6 571.0 L83.0 568.0 L71.0 557.6 L57.6 544.0 L52.3 535.0"/><path d="M1.0 563.2 L13.6 554.2 L27.2 549.6 L40.8 555.3 L45.4 563.2 L44.2 576.8 L39.7 592.7 L29.5 598.4 L18.0 599.5 L9.0 590.4 L2.3 576.8 L1.0 563.2"/><path d="M317.5 468.0 L319.7 477.0 L327.7 490.7 L324.3 513.4 L331.0 529.2 L326.5 545.0 L322.0 558.7 L326.5 572.3 L340.1 586.0 L361.0 586.0"/><path d="M0.0 702.0 L22.7 694.8 L68.0 692.5 L90.7 683.4 L136.0 675.5 L179.0 677.7 L195.0 684.6 L231.3 680.0 L242.6 669.8 L251.7 667.5 L258.5 669.8 L266.4 673.2 L288.0 666.4 L301.6 668.7 L317.5 673.2 L349.2 675.5 L361.0 672.0"/><path d="M361.0 642.6 L352.6 654.0 L355.0 663.0 L361.0 666.4"/><path d="M349.2 675.5 L351.5 692.5 L343.5 694.8 L347.0 702.0"/><path d="M415.4 468.0 L417.7 474.8 L408.6 547.4 L406.4 563.2 L398.4 572.3 L376.9 578.0 L361.0 586.0"/><path d="M547.0 468.0 L585.5 477.0 L628.6 502.0 L664.9 524.7 L669.4 538.3 L677.3 551.9 L679.6 565.5 L669.4 583.6 L667.0 596.0 L653.5 598.4 L663.7 583.6 L660.3 572.3 L651.3 566.6 L643.3 570.0 L636.5 580.2 L619.5 579.1 L605.9 583.6 L600.2 592.7 L602.5 601.8 L608.2 605.2 L627.4 604.0"/><path d="M627.4 604.0 L596.8 612.0 L578.7 607.5 L566.2 601.8 L535.6 604.0 L524.3 610.9 L499.3 617.7 L496.0 629.0 L499.3 638.0 L515.2 647.0 L530.0 660.7 L547.0 665.3 L608.2 702.0"/><path d="M722.0 608.6 L696.6 638.0 L676.2 641.5 L667.0 638.0 L661.5 649.4 L667.0 681.0 L658.0 702.0"/><path d="M361.0 641.5 L367.8 640.4 L375.7 647.0 L378.0 657.3 L395.0 652.8 L415.4 652.8 L422.2 651.7 L431.3 661.9 L456.2 665.3 L469.8 669.8 L474.4 681.1 L475.5 694.8 L472.0 702.0"/><path d="M790.0 468.0 L808.2 483.9 L813.8 499.7 L810.4 515.6 L802.5 528.0 L751.5 551.9 L753.7 565.5 L750.3 574.6 L722.0 608.6"/><path d="M830.8 468.0 L829.7 482.7 L835.4 493.0 L844.4 502.0 L858.0 511.0 L860.3 514.5"/><path d="M835.4 515.6 L840.0 511.0 L851.3 508.8 L858.0 513.4 L867.0 522.4 L867.0 528.0 L878.5 530.4 L885.3 522.4 L884.0 514.5 L888.7 508.8 L901.0 504.3 L903.4 493.0 L908.0 480.5 L916.0 477.0 L918.0 468.0"/><path d="M835.4 515.6 L837.6 522.4 L849.0 530.4 L855.8 536.0 L858.0 542.8 L869.4 550.8 L871.7 558.7 L878.5 565.5 L885.3 565.5 L887.5 559.8 L896.6 567.8 L896.6 572.3 L889.8 583.6 L888.7 599.5 L883.0 604.0 L878.5 617.7 L885.3 623.3 L894.3 626.7 L892.0 638.0 L903.4 649.4 L917.0 647.0 L921.5 641.5 L925.0 649.4 L937.4 656.2 L940.8 663.0 L935.0 676.6 L938.6 686.8 L944.2 702.0"/><path d="M960.0 702.0 L965.8 693.6 L971.4 702.0"/><path d="M1139.7 468.0 L1144.2 486.0 L1128.4 493.0 L1125.0 499.7 L1128.4 510.0 L1136.3 515.6 L1138.6 542.8 L1161.2 541.7 L1172.6 558.7 L1172.6 570.0 L1169.2 578.0 L1154.4 581.4 L1151.0 588.2 L1155.6 598.4 L1152.2 599.5 L1151.0 613.0 L1155.6 620.0 L1187.3 630.0 L1194.0 638.0 L1187.3 642.6 L1186.2 647.0 L1191.8 658.5 L1194.0 679.0 L1198.6 686.8 L1205.4 689.0 L1200.9 702.0"/><path d="M344.7 702.0 L330.0 711.0 L333.3 714.5 L340.1 715.6 L339.0 724.7 L336.7 731.5 L334.5 747.4 L339.0 758.7 L340.1 767.8 L336.7 776.8 L344.7 782.5 L337.9 795.0 L334.5 801.8 L336.7 810.8 L331.0 817.6 L317.5 826.7 L313.0 838.0 L307.3 839.2 L301.6 847.0 L300.5 860.7 L315.2 894.7 L327.7 900.4 L337.9 915.0 L340.1 931.0 L344.7 936.0"/><path d="M472.1 702.0 L459.6 720.0 L446.0 728.0 L449.4 739.4 L464.2 740.5 L471.0 745.0 L473.2 770.0 L476.6 778.0 L490.3 787.0 L498.2 799.5 L497.0 808.6 L491.4 818.8 L472.0 825.6 L466.4 850.5 L472.1 858.5 L475.5 878.9 L488.0 886.8 L519.7 902.7 L535.6 906.0 L560.5 899.3 L610.4 912.9 L633.0 928.8 L649.0 933.3 L653.5 936.0"/><path d="M488.0 886.8 L481.2 906.0 L480.0 926.5 L485.7 936.0"/><path d="M534.5 738.3 L540.0 737.0 L549.0 737.0 L554.9 744.0 L554.9 752.0 L550.3 757.6 L542.4 758.7 L544.7 767.8 L540.1 776.8 L531.0 778.0 L515.2 773.4 L509.5 763.2 L515.2 755.3 L535.6 755.3 L533.3 747.4 L534.5 738.3"/><path d="M594.6 727.0 L603.6 723.5 L612.7 724.7 L630.8 742.8 L632.0 751.9 L624.0 759.8 L612.7 759.8 L602.5 753.0 L594.6 738.3 L594.6 727.0"/><path d="M944.2 702.0 L951.0 705.4 L959.0 704.3 L960.0 702.0"/><path d="M971.4 702.0 L971.4 711.0 L980.5 722.4 L987.3 719.0 L988.4 702.0"/><path d="M990.7 702.0 L997.5 708.8 L997.5 729.2 L1005.5 739.4 L1011.1 737.1 L1015.7 741.7 L1014.5 749.6 L1027.0 756.4 L1022.5 762.0 L1025.9 770.0 L1027.0 783.6 L1032.7 788.2 L1046.3 787.0 L1072.3 791.6 L1074.6 798.4 L1083.0 804.0"/><path d="M1046.3 797.2 L1054.2 793.8 L1061.0 801.8 L1059.9 810.8 L1053.0 810.8 L1048.5 805.2 L1046.3 797.2"/><path d="M876.2 936.0 L892.0 919.7 L914.7 908.4 L929.5 906.0 L939.7 899.3 L946.5 898.2 L957.8 899.3 L969.2 898.2 L1016.8 916.3 L1021.3 922.0 L1025.9 936.0"/><path d="M608.2 702.0 L621.8 707.7 L646.7 713.3 L658.0 705.4 L660.3 702.0"/><path d="M1200.9 702.0 L1205.4 706.5 L1219.0 707.7 L1225.9 702.0"/><path d="M1228.0 702.0 L1231.5 712.2 L1245.0 707.7 L1253.0 707.7 L1264.4 715.6 L1271.2 718.0 L1278.0 727.0 L1293.9 739.4 L1301.8 730.3 L1308.6 732.6 L1310.9 742.8 L1332.4 736.0 L1341.5 740.5 L1351.7 738.3 L1359.6 722.4 L1363.0 702.0"/><path d="M1293.9 739.4 L1295.0 741.7 L1310.9 742.8"/><path d="M1363.0 702.0 L1377.8 704.3 L1411.8 720.0 L1425.4 736.0 L1444.0 747.4"/><path d="M1245.0 707.7 L1249.7 715.6 L1246.3 724.7 L1239.5 740.5 L1232.7 742.8 L1229.3 746.2 L1221.3 750.8 L1216.8 747.4 L1215.7 738.3 L1213.4 733.7 L1203.2 742.8 L1201.0 761.0 L1204.3 767.8 L1196.4 776.8 L1187.3 778.0 L1181.6 781.4 L1176.0 775.7 L1173.7 771.2 L1162.4 776.8 L1162.4 783.6 L1148.8 805.2 L1142.0 800.6 L1136.3 799.5 L1133.0 806.3 L1125.0 806.3 L1121.5 801.8 L1083.0 805.2"/><path d="M1444.0 774.6 L1420.9 781.4 L1416.3 792.7 L1420.9 810.8 L1444.0 824.4"/><circle cx="558.3" cy="584.8" r="11.5"/><circle cx="504.5" cy="695.0" r="13"/><circle cx="914.7" cy="668.7" r="5.5"/></g><g fill="none" stroke="#b46a42" stroke-width="0.9" stroke-linejoin="round"><path d="M304.0 0.0 L304.6 6.2 L301.5 15.5 L300.7 21.7 L303.0 28.7 L307.7 29.5"/><path d="M307.7 29.5 L310.8 32.6 L320.0 31.8 L331.0 27.9 L340.3 30.2 L346.5 27.1 L349.6 25.6 L355.8 21.0 L360.4 20.2 L366.6 23.3 L376.0 23.3 L386.8 27.9 L394.5 33.3"/><path d="M349.6 25.6 L343.4 21.7 L345.0 17.0 L351.0 14.7 L354.0 17.0 L352.7 23.3 L348.0 28.0"/><path d="M307.7 29.5 L303.0 32.6 L300.0 37.2 L287.6 38.0 L286.0 34.9 L276.7 34.9 L272.0 44.2 L276.7 46.5 L273.6 51.2 L262.8 63.6 L251.0 72.9 L252.0 83.7 L236.4 97.7 L238.7 108.5 L230.2 121.0 L231.8 126.4 L241.8 123.3 L244.0 114.7 L255.0 105.4 L267.4 107.0 L270.5 117.8 L275.2 130.2 L279.0 139.5 L275.2 145.0 L269.0 148.8 L270.5 155.0 L275.2 160.0 L276.6 161.0 L284.6 174.6 L281.0 183.7 L270.0 188.0 L260.8 192.7 L265.0 204.0 L276.6 211.0 L280.0 220.0 L272.0 234.0"/><path d="M279.0 139.5 L286.0 141.1 L293.8 138.0 L304.6 136.4 L315.5 134.9 L323.2 128.7 L332.5 114.7 L338.7 107.0 L343.4 105.4 L343.4 116.3 L349.6 124.0 L358.9 130.2 L363.5 136.4 L366.6 141.1 L365.0 145.0 L370.5 144.2 L369.7 136.4 L377.5 122.5 L380.6 107.0 L385.2 100.8 L389.9 102.3 L391.4 111.6 L396.1 114.7 L410.0 110.0 L417.8 113.2 L419.3 119.4 L422.4 117.8 L417.8 108.5 L422.4 96.1 L428.7 93.0 L435.6 97.7 L434.9 82.2 L431.8 74.4 L425.6 79.0 L414.7 76.0 L410.0 68.2 L399.2 65.0 L391.4 63.6 L393.0 55.8 L391.4 49.6 L397.6 40.3 L394.5 33.3"/><path d="M394.5 33.3 L403.8 31.0 L405.4 28.7 L410.0 34.0 L416.2 38.8 L422.4 45.0 L425.6 49.6 L433.3 43.4 L434.9 31.0 L441.0 31.0 L447.0 34.0 L455.0 33.3 L457.5 41.0 L469.7 41.0 L478.4 35.8 L489.0 29.7 L504.6 27.0 L513.3 26.2 L515.0 20.0 L523.8 22.7 L539.5 23.6 L543.0 31.4 L551.7 37.5 L555.2 24.4 L550.0 17.5 L549.0 7.0 L544.8 0.0"/><path d="M431.8 74.4 L439.5 79.0 L448.8 80.6 L454.0 83.8 L461.0 84.6 L464.5 75.0 L473.2 70.7 L489.0 68.0 L513.3 63.7 L509.8 68.0 L516.8 76.8 L521.2 86.4 L537.8 92.5 L558.7 96.9 L583.0 100.4 L602.3 104.7 L618.0 104.7 L621.5 110.0 L635.5 94.2 L660.0 90.8 L667.0 88.0 L679.0 86.4 L687.9 90.0 L686.0 80.3 L694.8 76.8 L705.3 71.6 L708.8 66.3 L705.3 61.0 L707.0 52.4 L706.2 41.9 L714.0 40.0 L717.5 33.0 L715.8 26.2 L707.0 22.7 L710.5 16.6 L721.0 17.5 L734.0 20.0"/><path d="M583.0 100.4 L581.4 104.7 L567.4 115.2 L569.2 120.4 L579.7 124.0 L574.4 132.6 L578.0 138.0 L578.0 148.3 L590.0 155.3 L590.0 158.8 L581.4 158.0 L569.2 162.3 L560.5 170.0 L544.8 176.3 L542.4 197.0 L531.0 226.8 L528.8 234.0"/><path d="M560.5 170.0 L562.8 186.0 L571.9 208.6 L592.0 234.0"/><path d="M569.2 162.3 L576.2 167.5 L591.9 171.9 L607.6 168.4 L621.5 157.0 L628.5 165.8 L639.0 170.0 L651.2 171.9 L658.2 169.3 L656.4 160.6 L658.2 153.6 L672.2 144.9 L674.0 130.9 L670.4 122.2 L686.0 115.2 L700.0 110.0 L700.0 101.2 L705.3 99.5 L705.3 90.8 L694.8 76.8"/><path d="M722.0 186.0 L708.0 188.0 L701.0 199.5 L692.0 195.0 L683.0 186.0 L677.0 189.0 L676.0 211.0 L687.5 226.8 L694.0 234.0"/><path d="M722.0 21.5 L735.6 20.4 L733.0 11.3 L738.0 3.4 L744.7 0.0 L751.5 4.5 L767.0 18.0 L808.0 17.0 L816.0 12.5 L812.7 6.8 L815.0 0.0"/><path d="M1003.0 0.0 L998.6 4.5 L994.0 11.3 L980.5 16.0 L973.7 18.0 L967.0 28.3 L960.0 36.3 L958.0 45.4 L946.5 65.8 L939.7 81.6 L935.0 90.7 L928.0 97.5 L926.0 108.8 L919.0 115.6 L905.7 116.8 L898.9 124.7 L880.7 127.0 L867.0 123.6 L851.0 123.6 L837.6 135.0 L826.0 136.0 L815.0 140.6"/><path d="M1005.5 0.0 L1023.6 0.0 L1030.0 2.0 L1046.0 4.5 L1062.0 9.0 L1075.7 4.5 L1083.0 11.3"/><path d="M722.0 108.8 L740.0 122.4 L747.0 136.0 L758.0 138.3 L772.0 147.4 L796.8 150.8 L809.3 140.6 L815.0 140.6"/><path d="M880.7 127.0 L884.0 133.8 L894.0 142.9 L905.7 150.8 L904.5 167.8 L914.7 178.0 L926.0 183.7 L937.4 189.3 L933.0 199.5 L939.7 206.4 L931.8 212.0 L942.0 217.7 L957.8 223.4 L969.0 234.0"/><path d="M957.8 223.4 L969.0 228.0 L980.5 218.8 L994.0 227.9 L980.5 234.0"/><path d="M815.0 140.6 L819.5 154.0 L821.8 165.5 L826.3 174.6 L833.0 181.4 L844.4 186.0 L833.0 188.2 L828.6 199.5 L830.8 205.0 L840.0 207.5 L835.4 226.8 L830.8 234.0"/><path d="M722.0 188.2 L728.8 183.7 L740.0 188.2 L753.7 191.6 L767.4 195.0 L776.4 191.6 L787.8 193.9 L808.0 195.0 L812.7 204.0 L817.0 208.6 L828.6 205.0"/><path d="M1083.0 10.2 L1089.8 18.0 L1098.9 20.4 L1108.0 8.0 L1151.0 2.3 L1153.0 0.0"/><path d="M1191.8 0.0 L1196.4 9.0 L1201.0 22.7 L1212.0 36.3 L1214.5 45.4 L1223.6 54.4 L1225.9 61.2 L1237.0 70.3 L1239.5 79.4 L1245.0 93.0 L1243.0 106.6 L1239.5 120.2 L1237.0 136.0 L1239.5 158.7 L1241.7 167.8 L1248.5 179.0 L1266.7 186.0 L1271.2 179.0 L1282.5 174.6 L1296.0 172.3 L1307.5 176.9 L1309.8 188.2 L1325.6 193.9 L1337.0 195.0 L1346.0 183.7 L1341.5 174.6 L1328.0 170.0 L1328.0 165.5 L1373.0 108.8 L1380.0 107.7 L1382.3 120.2 L1391.4 129.3 L1444.0 142.9"/><path d="M1273.5 0.0 L1287.0 2.3 L1291.6 11.3 L1288.0 22.7 L1286.0 34.0 L1296.0 40.8 L1305.0 44.2 L1305.0 61.2 L1307.5 72.6 L1321.0 79.4 L1323.4 97.5 L1331.3 107.7 L1318.8 111.0 L1309.8 106.6 L1300.7 104.3 L1289.4 107.7 L1288.0 99.8 L1278.0 103.2 L1282.5 120.2 L1275.7 136.0 L1269.0 139.5 L1267.8 147.4 L1257.6 154.2 L1256.5 169.0 L1246.3 167.8 L1239.5 158.7"/><path d="M1325.6 193.9 L1323.4 204.0 L1314.0 220.0 L1287.0 234.0"/><path d="M1444.0 154.2 L1430.0 163.3 L1425.4 174.6 L1430.0 186.0 L1444.0 190.5"/><path d="M272.0 234.0 L272.0 238.5 L277.8 248.7 L294.8 256.7 L308.4 253.3 L309.5 257.8 L300.5 271.4 L303.0 289.6"/><path d="M297.0 279.0 L299.5 292.0 L301.6 292.0 L299.0 278.0"/><path d="M301.6 293.0 L305.0 289.6 L333.0 280.5 L342.4 272.5 L356.0 251.0 L361.0 251.0"/><path d="M301.6 293.0 L275.5 312.2 L272.0 322.4 L256.0 337.0 L240.0 339.4 L215.4 331.5 L211.0 328.0 L192.7 324.7 L183.7 318.0 L167.8 315.6 L140.6 306.6 L124.7 320.0 L113.4 321.3 L110.0 329.2 L108.8 345.0 L113.4 354.2 L115.6 362.0 L121.3 362.0 L123.6 370.0 L118.0 392.7 L99.8 413.0 L81.6 424.5 L61.2 440.4 L22.7 452.8 L11.3 468.0"/><path d="M0.0 338.3 L9.0 338.3 L13.6 342.8 L21.5 342.8 L25.0 347.4 L22.7 354.2 L25.0 359.9 L34.0 358.7 L45.4 357.6 L51.0 365.5 L61.2 361.0 L72.6 366.7 L79.4 365.5 L80.5 362.0 L93.0 357.6 L99.8 361.0 L115.6 361.0"/><path d="M361.0 336.0 L347.0 342.8 L335.6 361.0 L338.0 397.3 L347.0 415.4 L361.0 433.5"/><path d="M361.0 434.7 L335.6 429.0 L324.0 438.0 L317.5 468.0"/><path d="M361.0 251.0 L381.4 259.0 L401.8 272.5 L408.6 274.8 L412.0 281.6 L399.5 293.0 L395.0 313.4 L386.0 312.2 L374.6 318.0 L371.2 329.2 L361.0 336.0"/><path d="M395.0 313.4 L395.0 315.6 L398.4 329.2 L403.0 340.6 L404.0 352.0 L406.4 372.3 L401.8 390.5 L398.4 404.0 L396.0 422.2 L383.7 429.0 L379.0 429.0 L361.0 433.5"/><path d="M406.4 372.3 L426.8 380.3 L451.7 380.3 L485.7 391.6 L519.7 420.0 L533.3 456.0 L547.0 468.0"/><path d="M396.0 422.2 L406.4 438.0 L415.4 454.0 L415.4 468.0"/><path d="M532.0 234.0 L533.3 243.0 L547.0 255.5 L572.0 273.7 L585.5 279.4 L594.6 295.2 L603.6 324.7 L609.4 342.3 L625.7 360.0 L643.3 373.5 L661.0 368.0 L673.2 362.7 L682.7 365.4 L685.4 368.0 L686.8 377.6 L692.2 381.7 L704.4 388.5 L707.0 395.3 L708.5 405.0 L711.3 420.0 L722.0 424.5"/><path d="M592.3 234.0 L610.4 247.6 L628.4 265.0 L644.7 285.4 L661.0 297.6 L684.0 311.1 L671.8 312.5 L661.0 308.4 L655.6 309.8 L652.8 328.8 L671.8 337.0 L696.3 338.3 L697.6 345.0 L701.7 351.8 L709.8 353.2 L722.0 354.2"/><path d="M709.8 354.6 L699.0 356.0 L689.5 358.6 L686.8 365.4 L690.8 373.5 L701.7 376.3 L711.2 372.2 L712.5 362.7 L709.8 354.6"/><path d="M694.3 234.0 L696.6 245.3 L708.0 259.0 L712.5 265.0 L722.0 277.0"/><path d="M828.6 234.0 L831.0 243.0 L845.6 254.4 L852.4 260.0 L851.3 265.7 L835.4 263.5 L840.0 272.5 L847.8 279.4 L846.7 289.6 L835.4 290.7 L834.2 294.0"/><path d="M834.2 294.0 L821.8 294.0 L827.4 304.3 L820.6 307.7 L811.6 308.8 L808.2 322.4 L800.2 327.0 L800.2 342.8 L803.6 352.0 L799.0 367.8 L799.0 373.5"/><path d="M722.0 277.0 L744.7 295.2 L747.0 304.3 L764.0 322.4 L758.3 331.5 L769.6 333.8 L781.0 342.8 L796.8 349.6 L800.2 352.0"/><path d="M834.2 294.0 L846.7 304.3 L858.0 315.6 L867.0 320.2 L876.2 327.0 L885.3 332.6 L871.7 340.6 L872.8 352.0 L860.3 358.7 L857.0 349.6 L837.6 375.7 L841.0 390.5 L837.6 401.8"/><path d="M885.3 332.6 L892.0 327.0 L898.9 320.2 L896.6 312.2 L906.8 308.8 L910.2 315.6 L921.5 318.0 L927.2 331.5 L935.0 335.0 L935.0 341.7 L948.8 345.0 L947.6 354.2 L939.7 365.5 L940.8 370.0"/><path d="M872.8 352.0 L880.7 365.5 L892.0 374.6 L897.7 388.2 L896.6 395.0 L902.3 393.9 L903.4 383.7 L919.3 375.7 L926.0 381.4 L930.6 372.3 L940.8 370.0 L957.8 365.5 L973.7 364.4"/><path d="M980.5 234.0 L989.6 247.6 L978.2 262.3 L976.0 274.8 L982.8 297.5 L1004.3 315.6 L989.6 333.8 L980.5 339.4 L982.8 356.4 L973.7 365.5"/><path d="M991.8 249.9 L1007.7 259.0 L998.6 268.0 L1001.0 274.8 L1028.0 273.7 L1057.6 281.6 L1075.7 278.2 L1083.0 282.8"/><path d="M973.7 365.5 L981.6 374.6 L998.6 384.8 L1007.7 406.3 L1005.5 429.0 L994.0 431.3 L992.0 440.4 L971.4 439.2 L948.8 451.7 L935.0 456.2 L914.7 457.4 L903.4 452.8 L897.7 441.5 L892.0 431.3 L889.8 415.4 L894.3 397.3 L896.6 395.0"/><path d="M1005.5 429.0 L1016.8 426.7 L1039.5 420.0 L1055.3 417.7 L1062.0 415.4 L1075.7 415.4 L1083.0 422.2"/><path d="M914.7 457.4 L917.0 468.0"/><path d="M837.6 401.8 L835.4 415.4 L837.6 433.5 L833.0 460.8 L832.0 468.0"/><path d="M722.0 354.2 L744.7 353.0 L767.4 357.6 L790.0 367.8 L812.7 383.7 L821.8 395.0 L835.4 401.8"/><path d="M722.0 426.7 L744.7 438.0 L767.4 451.7 L790.0 468.0"/><path d="M1083.0 282.8 L1094.3 280.5 L1101.0 282.8 L1108.0 282.8 L1114.7 287.3 L1131.8 281.6 L1148.8 263.5 L1189.6 253.3 L1199.8 254.4 L1205.4 262.3 L1216.8 261.2 L1220.2 264.6 L1229.3 262.3 L1233.8 273.7 L1253.0 279.4 L1271.2 279.4"/><path d="M1284.8 234.0 L1271.2 279.4 L1273.5 293.0 L1259.9 313.4 L1246.3 314.5 L1240.6 327.0 L1237.2 367.8 L1246.3 383.7 L1247.4 389.3 L1228.0 389.3 L1224.7 388.2 L1213.4 392.7 L1199.8 381.4 L1189.6 382.5 L1182.8 388.2 L1169.2 390.5 L1157.8 397.3 L1157.8 404.0 L1148.8 404.0 L1146.5 406.3 L1151.0 420.0 L1148.8 426.7 L1137.4 429.0 L1123.8 430.2 L1110.2 434.7 L1087.5 424.5 L1083.0 423.3"/><path d="M1157.8 404.0 L1169.2 410.9 L1170.3 426.7 L1157.8 433.5 L1156.7 449.4 L1151.0 460.8 L1139.7 468.0"/><path d="M1247.4 389.3 L1250.8 408.6 L1278.0 421.0 L1325.6 429.0 L1337.0 424.5 L1368.7 432.4 L1376.7 429.0 L1380.0 418.8 L1430.0 388.2 L1444.0 386.0"/><path d="M11.3 468.0 L0.0 479.3"/><path d="M0.0 506.5 L3.4 513.4 L0.0 524.7"/><path d="M52.3 535.0 L53.0 529.0 L59.0 521.5 L71.0 512.0 L86.0 504.3 L108.8 499.7 L114.0 501.5 L119.0 508.8 L124.7 496.3 L144.0 490.7 L156.5 494.0 L164.2 505.0 L167.2 514.0 L166.5 521.5 L162.7 529.0 L153.7 532.0 L129.7 524.5 L125.0 533.5 L119.0 542.5 L110.0 556.0 L99.6 568.8 L90.6 571.0 L83.0 568.0 L71.0 557.6 L57.6 544.0 L52.3 535.0"/><path d="M1.0 563.2 L13.6 554.2 L27.2 549.6 L40.8 555.3 L45.4 563.2 L44.2 576.8 L39.7 592.7 L29.5 598.4 L18.0 599.5 L9.0 590.4 L2.3 576.8 L1.0 563.2"/><path d="M317.5 468.0 L319.7 477.0 L327.7 490.7 L324.3 513.4 L331.0 529.2 L326.5 545.0 L322.0 558.7 L326.5 572.3 L340.1 586.0 L361.0 586.0"/><path d="M0.0 702.0 L22.7 694.8 L68.0 692.5 L90.7 683.4 L136.0 675.5 L179.0 677.7 L195.0 684.6 L231.3 680.0 L242.6 669.8 L251.7 667.5 L258.5 669.8 L266.4 673.2 L288.0 666.4 L301.6 668.7 L317.5 673.2 L349.2 675.5 L361.0 672.0"/><path d="M361.0 642.6 L352.6 654.0 L355.0 663.0 L361.0 666.4"/><path d="M349.2 675.5 L351.5 692.5 L343.5 694.8 L347.0 702.0"/><path d="M415.4 468.0 L417.7 474.8 L408.6 547.4 L406.4 563.2 L398.4 572.3 L376.9 578.0 L361.0 586.0"/><path d="M547.0 468.0 L585.5 477.0 L628.6 502.0 L664.9 524.7 L669.4 538.3 L677.3 551.9 L679.6 565.5 L669.4 583.6 L667.0 596.0 L653.5 598.4 L663.7 583.6 L660.3 572.3 L651.3 566.6 L643.3 570.0 L636.5 580.2 L619.5 579.1 L605.9 583.6 L600.2 592.7 L602.5 601.8 L608.2 605.2 L627.4 604.0"/><path d="M627.4 604.0 L596.8 612.0 L578.7 607.5 L566.2 601.8 L535.6 604.0 L524.3 610.9 L499.3 617.7 L496.0 629.0 L499.3 638.0 L515.2 647.0 L530.0 660.7 L547.0 665.3 L608.2 702.0"/><path d="M722.0 608.6 L696.6 638.0 L676.2 641.5 L667.0 638.0 L661.5 649.4 L667.0 681.0 L658.0 702.0"/><path d="M361.0 641.5 L367.8 640.4 L375.7 647.0 L378.0 657.3 L395.0 652.8 L415.4 652.8 L422.2 651.7 L431.3 661.9 L456.2 665.3 L469.8 669.8 L474.4 681.1 L475.5 694.8 L472.0 702.0"/><path d="M790.0 468.0 L808.2 483.9 L813.8 499.7 L810.4 515.6 L802.5 528.0 L751.5 551.9 L753.7 565.5 L750.3 574.6 L722.0 608.6"/><path d="M830.8 468.0 L829.7 482.7 L835.4 493.0 L844.4 502.0 L858.0 511.0 L860.3 514.5"/><path d="M835.4 515.6 L840.0 511.0 L851.3 508.8 L858.0 513.4 L867.0 522.4 L867.0 528.0 L878.5 530.4 L885.3 522.4 L884.0 514.5 L888.7 508.8 L901.0 504.3 L903.4 493.0 L908.0 480.5 L916.0 477.0 L918.0 468.0"/><path d="M835.4 515.6 L837.6 522.4 L849.0 530.4 L855.8 536.0 L858.0 542.8 L869.4 550.8 L871.7 558.7 L878.5 565.5 L885.3 565.5 L887.5 559.8 L896.6 567.8 L896.6 572.3 L889.8 583.6 L888.7 599.5 L883.0 604.0 L878.5 617.7 L885.3 623.3 L894.3 626.7 L892.0 638.0 L903.4 649.4 L917.0 647.0 L921.5 641.5 L925.0 649.4 L937.4 656.2 L940.8 663.0 L935.0 676.6 L938.6 686.8 L944.2 702.0"/><path d="M960.0 702.0 L965.8 693.6 L971.4 702.0"/><path d="M1139.7 468.0 L1144.2 486.0 L1128.4 493.0 L1125.0 499.7 L1128.4 510.0 L1136.3 515.6 L1138.6 542.8 L1161.2 541.7 L1172.6 558.7 L1172.6 570.0 L1169.2 578.0 L1154.4 581.4 L1151.0 588.2 L1155.6 598.4 L1152.2 599.5 L1151.0 613.0 L1155.6 620.0 L1187.3 630.0 L1194.0 638.0 L1187.3 642.6 L1186.2 647.0 L1191.8 658.5 L1194.0 679.0 L1198.6 686.8 L1205.4 689.0 L1200.9 702.0"/><path d="M344.7 702.0 L330.0 711.0 L333.3 714.5 L340.1 715.6 L339.0 724.7 L336.7 731.5 L334.5 747.4 L339.0 758.7 L340.1 767.8 L336.7 776.8 L344.7 782.5 L337.9 795.0 L334.5 801.8 L336.7 810.8 L331.0 817.6 L317.5 826.7 L313.0 838.0 L307.3 839.2 L301.6 847.0 L300.5 860.7 L315.2 894.7 L327.7 900.4 L337.9 915.0 L340.1 931.0 L344.7 936.0"/><path d="M472.1 702.0 L459.6 720.0 L446.0 728.0 L449.4 739.4 L464.2 740.5 L471.0 745.0 L473.2 770.0 L476.6 778.0 L490.3 787.0 L498.2 799.5 L497.0 808.6 L491.4 818.8 L472.0 825.6 L466.4 850.5 L472.1 858.5 L475.5 878.9 L488.0 886.8 L519.7 902.7 L535.6 906.0 L560.5 899.3 L610.4 912.9 L633.0 928.8 L649.0 933.3 L653.5 936.0"/><path d="M488.0 886.8 L481.2 906.0 L480.0 926.5 L485.7 936.0"/><path d="M534.5 738.3 L540.0 737.0 L549.0 737.0 L554.9 744.0 L554.9 752.0 L550.3 757.6 L542.4 758.7 L544.7 767.8 L540.1 776.8 L531.0 778.0 L515.2 773.4 L509.5 763.2 L515.2 755.3 L535.6 755.3 L533.3 747.4 L534.5 738.3"/><path d="M594.6 727.0 L603.6 723.5 L612.7 724.7 L630.8 742.8 L632.0 751.9 L624.0 759.8 L612.7 759.8 L602.5 753.0 L594.6 738.3 L594.6 727.0"/><path d="M944.2 702.0 L951.0 705.4 L959.0 704.3 L960.0 702.0"/><path d="M971.4 702.0 L971.4 711.0 L980.5 722.4 L987.3 719.0 L988.4 702.0"/><path d="M990.7 702.0 L997.5 708.8 L997.5 729.2 L1005.5 739.4 L1011.1 737.1 L1015.7 741.7 L1014.5 749.6 L1027.0 756.4 L1022.5 762.0 L1025.9 770.0 L1027.0 783.6 L1032.7 788.2 L1046.3 787.0 L1072.3 791.6 L1074.6 798.4 L1083.0 804.0"/><path d="M1046.3 797.2 L1054.2 793.8 L1061.0 801.8 L1059.9 810.8 L1053.0 810.8 L1048.5 805.2 L1046.3 797.2"/><path d="M876.2 936.0 L892.0 919.7 L914.7 908.4 L929.5 906.0 L939.7 899.3 L946.5 898.2 L957.8 899.3 L969.2 898.2 L1016.8 916.3 L1021.3 922.0 L1025.9 936.0"/><path d="M608.2 702.0 L621.8 707.7 L646.7 713.3 L658.0 705.4 L660.3 702.0"/><path d="M1200.9 702.0 L1205.4 706.5 L1219.0 707.7 L1225.9 702.0"/><path d="M1228.0 702.0 L1231.5 712.2 L1245.0 707.7 L1253.0 707.7 L1264.4 715.6 L1271.2 718.0 L1278.0 727.0 L1293.9 739.4 L1301.8 730.3 L1308.6 732.6 L1310.9 742.8 L1332.4 736.0 L1341.5 740.5 L1351.7 738.3 L1359.6 722.4 L1363.0 702.0"/><path d="M1293.9 739.4 L1295.0 741.7 L1310.9 742.8"/><path d="M1363.0 702.0 L1377.8 704.3 L1411.8 720.0 L1425.4 736.0 L1444.0 747.4"/><path d="M1245.0 707.7 L1249.7 715.6 L1246.3 724.7 L1239.5 740.5 L1232.7 742.8 L1229.3 746.2 L1221.3 750.8 L1216.8 747.4 L1215.7 738.3 L1213.4 733.7 L1203.2 742.8 L1201.0 761.0 L1204.3 767.8 L1196.4 776.8 L1187.3 778.0 L1181.6 781.4 L1176.0 775.7 L1173.7 771.2 L1162.4 776.8 L1162.4 783.6 L1148.8 805.2 L1142.0 800.6 L1136.3 799.5 L1133.0 806.3 L1125.0 806.3 L1121.5 801.8 L1083.0 805.2"/><path d="M1444.0 774.6 L1420.9 781.4 L1416.3 792.7 L1420.9 810.8 L1444.0 824.4"/><circle cx="558.3" cy="584.8" r="11.5"/><circle cx="504.5" cy="695.0" r="13"/><circle cx="914.7" cy="668.7" r="5.5"/></g><g font-family="Liberation Sans" font-weight="normal" fill="#d6d6d6" stroke="#8e8e8e" stroke-width="2.2" paint-order="stroke" stroke-linejoin="round">
<path id="medl" d="M26.0 651.0 Q182.4 599.4 236.0 519.0" fill="none" stroke="none"/>
<text font-size="21"><textPath href="#medl" textLength="245" lengthAdjust="spacing">MEDITERRANEAN SEA</textPath></text>
<path id="medr" d="M1122.0 887.0 L1371.0 863.0" fill="none" stroke="none"/>
<text font-size="21"><textPath href="#medr" textLength="249" lengthAdjust="spacing">MEDITERRANEAN SEA</textPath></text>
<path id="adr" d="M616.0 292.0 L740.0 388.5" fill="none" stroke="none"/>
<text font-size="21"><textPath href="#adr" textLength="157" lengthAdjust="spacing">ADRIATIC SEA</textPath></text>
<path id="blk" d="M1321.0 338.0 Q1393.6 315.0 1454.0 310.0" fill="none" stroke="none"/>
<text font-size="22"><textPath href="#blk" textLength="128" lengthAdjust="spacing">BLACK SEA</textPath></text>
<text x="0" y="8" font-size="23" font-weight="normal" stroke-width="2" text-anchor="middle" transform="translate(307.0 133.5) rotate(-38)">A</text>
<text x="0" y="8" font-size="23" font-weight="normal" stroke-width="2" text-anchor="middle" transform="translate(332.5 112.5) rotate(-30)">L</text>
<text x="0" y="8" font-size="23" font-weight="normal" stroke-width="2" text-anchor="middle" transform="translate(361.0 98.0) rotate(-20)">P</text>
<text x="0" y="8" font-size="23" font-weight="normal" stroke-width="2" text-anchor="middle" transform="translate(397.0 86.0) rotate(-10)">S</text>
<text x="0" y="8" font-size="23" font-weight="normal" stroke-width="2" text-anchor="middle" transform="translate(495.0 68.5) rotate(-14)">A</text>
<text x="0" y="8" font-size="23" font-weight="normal" stroke-width="2" text-anchor="middle" transform="translate(527.7 63.0) rotate(-8)">L</text>
<text x="0" y="8" font-size="23" font-weight="normal" stroke-width="2" text-anchor="middle" transform="translate(561.7 62.5) rotate(-3)">P</text>
<text x="0" y="8" font-size="23" font-weight="normal" stroke-width="2" text-anchor="middle" transform="translate(595.0 62.0) rotate(4)">S</text>
</g>
<g font-family="Liberation Sans" font-weight="bold" fill="#fff" stroke="#3c3c3c" stroke-width="2" paint-order="stroke" stroke-linejoin="round">
<text x="22.5" y="97.8" font-size="12.3" textLength="45.6" lengthAdjust="spacingAndGlyphs">FRANCE</text>
<text x="293.2" y="84.5" font-size="10.3" textLength="81.0" lengthAdjust="spacingAndGlyphs">SWITZERLAND</text>
<text x="535.3" y="57.5" font-size="10.4" textLength="49.5" lengthAdjust="spacingAndGlyphs">AUSTRIA</text>
<text x="819.4" y="59.0" font-size="11.0" textLength="55.6" lengthAdjust="spacingAndGlyphs">HUNGARY</text>
<text x="1230.0" y="52.0" font-size="11.0" textLength="58.0" lengthAdjust="spacingAndGlyphs">MOLDOVA</text>
<text x="1055.0" y="138.5" font-size="11.7" textLength="55.0" lengthAdjust="spacingAndGlyphs">ROMANIA</text>
<text x="589.4" y="149.0" font-size="10.3" textLength="57.3" lengthAdjust="spacingAndGlyphs">SLOVENIA</text>
<text x="708.0" y="165.7" font-size="10.6" textLength="50.4" lengthAdjust="spacingAndGlyphs">CROATIA</text>
<text x="721.0" y="239.0" font-size="11.7" textLength="75.0" lengthAdjust="spacingAndGlyphs">BOSNIA AND</text>
<text x="718.0" y="254.0" font-size="12.3" textLength="84.0" lengthAdjust="spacingAndGlyphs">HERZEGOVINA</text>
<text x="875.0" y="255.7" font-size="9.7" textLength="40.0" lengthAdjust="spacingAndGlyphs">SERBIA</text>
<text x="515.0" y="262.5" font-size="11.7" textLength="22.0" lengthAdjust="spacingAndGlyphs">SAN</text>
<text x="502.6" y="276.0" font-size="9.6" textLength="46.4" lengthAdjust="spacingAndGlyphs">MARINO</text>
<text x="520.7" y="351.0" font-size="11.4" textLength="30.9" lengthAdjust="spacingAndGlyphs">ITALY</text>
<text x="898.7" y="352.0" font-size="9.6" textLength="47.9" lengthAdjust="spacingAndGlyphs">KOSOVO</text>
<text x="1090.8" y="353.0" font-size="11.0" textLength="57.0" lengthAdjust="spacingAndGlyphs">BULGARIA</text>
<text x="3.3" y="357.7" font-size="11.2" textLength="55.7" lengthAdjust="spacingAndGlyphs">ANDORRA</text>
<text x="927.5" y="406.7" font-size="11.9" textLength="40.1" lengthAdjust="spacingAndGlyphs">NORTH</text>
<text x="912.0" y="420.7" font-size="11.6" textLength="71.0" lengthAdjust="spacingAndGlyphs">MACEDONIA</text>
<text x="844.0" y="450.7" font-size="9.7" textLength="50.5" lengthAdjust="spacingAndGlyphs">ALBANIA</text>
<text x="938.4" y="570.2" font-size="11.2" textLength="43.4" lengthAdjust="spacingAndGlyphs">GREECE</text>
<text x="597.8" y="748.6" font-size="11.2" textLength="38.8" lengthAdjust="spacingAndGlyphs">MALTA</text>
<text x="365.4" y="862.0" font-size="11.2" textLength="43.4" lengthAdjust="spacingAndGlyphs">TUNISIA</text>
<text x="168.8" y="152.5" font-size="10.6" textLength="20.7" lengthAdjust="spacingAndGlyphs">Lyon</text>
<text x="298.0" y="197.0" font-size="11.2" textLength="22.0" lengthAdjust="spacingAndGlyphs">Turin</text>
<text x="365.4" y="172.5" font-size="11.4" textLength="24.1" lengthAdjust="spacingAndGlyphs">Milan</text>
<text x="183.5" y="310.0" font-size="11.2" textLength="40.0" lengthAdjust="spacingAndGlyphs">Marseille</text>
<text x="515.0" y="396.0" font-size="9.9" textLength="25.0" lengthAdjust="spacingAndGlyphs">Rome</text>
<text x="869.4" y="213.6" font-size="11.7" textLength="41.4" lengthAdjust="spacingAndGlyphs">Belgrade</text>
<text x="1125.0" y="237.5" font-size="10.6" textLength="45.0" lengthAdjust="spacingAndGlyphs">Bucharest</text>
<text x="1344.8" y="104.4" font-size="9.7" textLength="26.2" lengthAdjust="spacingAndGlyphs">Odesa</text>
<text x="1010.0" y="346.0" font-size="9.3" textLength="22.0" lengthAdjust="spacingAndGlyphs">Sofia</text>
<text x="548.0" y="622.0" font-size="11.2" textLength="37.6" lengthAdjust="spacingAndGlyphs">Palermo</text>
<text x="410.8" y="697.0" font-size="12.6" textLength="24.0" lengthAdjust="spacingAndGlyphs">Tunis</text>
<text x="545.7" y="913.0" font-size="11.2" textLength="27.3" lengthAdjust="spacingAndGlyphs">Tripoli</text>
<text x="1023.5" y="629.0" font-size="11.2" textLength="32.0" lengthAdjust="spacingAndGlyphs">Athens</text>
<text x="1138.4" y="502.0" font-size="12.6" textLength="45.6" lengthAdjust="spacingAndGlyphs">Çanakkale</text>
<text x="1270.0" y="500.0" font-size="11.5" textLength="25.0" lengthAdjust="spacingAndGlyphs">Bursa</text>
<text x="1183.8" y="603.0" font-size="9.9" textLength="21.8" lengthAdjust="spacingAndGlyphs">Izmir</text>
<text x="1267.7" y="640.5" font-size="11.4" textLength="30.9" lengthAdjust="spacingAndGlyphs">Denizli</text>
<text x="1424.0" y="635.0" font-size="11.7" textLength="32.0" lengthAdjust="spacingAndGlyphs">Konya</text>
<text x="1439.0" y="516.0" font-size="12.6" textLength="44.0" lengthAdjust="spacingAndGlyphs">Ankara</text>
</g></svg></div>
<div id="mapb"></div><div id="mapr"></div>
<div id="status"><div class="sp" style="left:0px;width:99px;padding-left:5px">MapsID: 3727</div><div class="sp" style="left:101px;width:78px;padding-left:2px">png</div><div class="sp" style="left:182px;width:97px;padding-left:2px">MinZoom: 1</div><div class="sp" style="left:282px;width:97px;padding-left:2px">MaxZoom: 14</div><div class="sp" style="left:382px;width:97px;padding-left:2px">TileSize: 256</div><div class="sp" style="left:482px;width:97px;padding-left:2px">EPSG:3857</div><div class="sp" style="left:582px;width:1338px;padding-left:2px">Longitude=16.127930, Latitude=38.719805, tile=6/34/24.png</div></div>
</body></html>
